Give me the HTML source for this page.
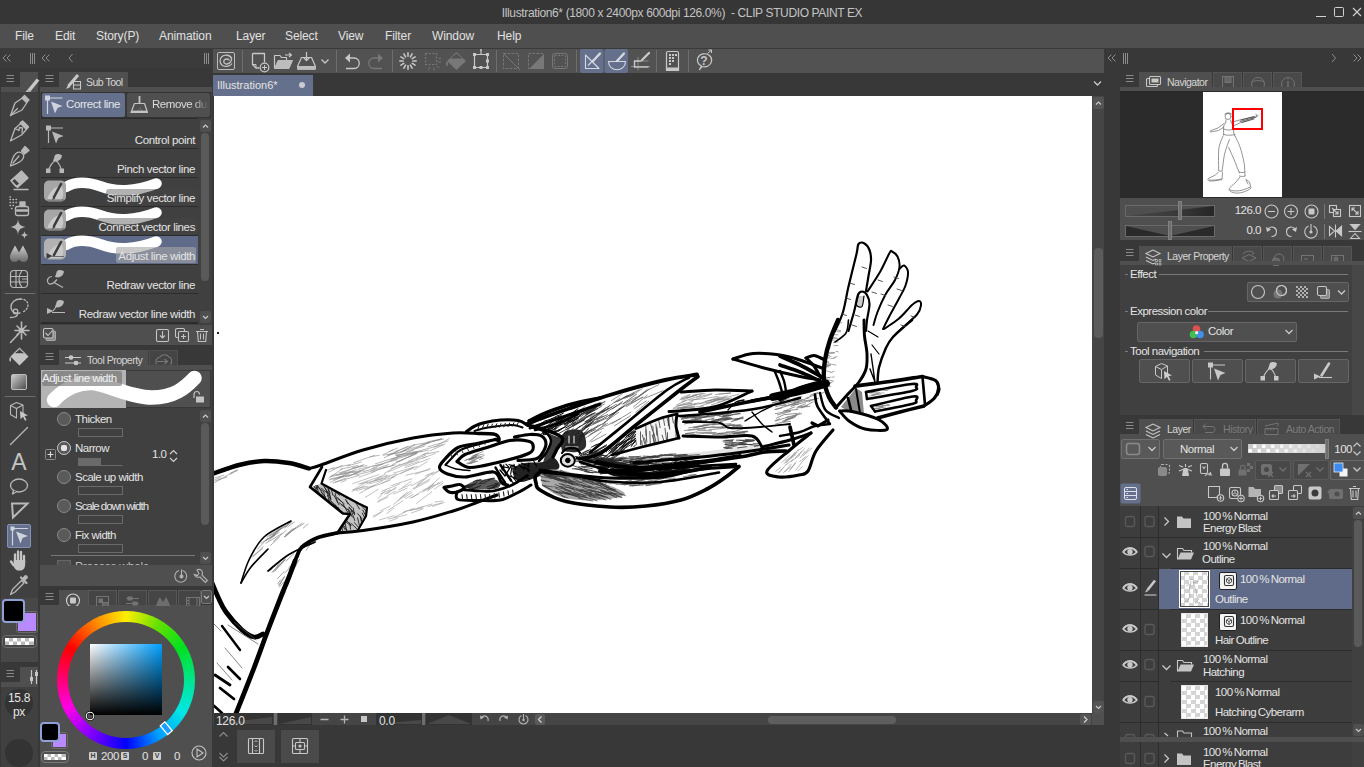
<!DOCTYPE html>
<html><head><meta charset="utf-8"><title>CLIP STUDIO PAINT EX</title>
<style>
*{box-sizing:border-box;margin:0;padding:0}
html,body{width:1364px;height:767px;overflow:hidden;background:#383838;font-family:"Liberation Sans",sans-serif;font-size:12px;color:#d2d2d2}
.abs{position:absolute}
#root{position:relative;width:1364px;height:767px;overflow:hidden;background:#383838}
#title{left:0;top:0;width:1364px;height:24px;background:#363636}
#title .t{position:absolute;left:0;width:1364px;top:6px;text-align:center;font-size:12px;color:#c4c4c4;letter-spacing:-0.37px;white-space:pre}
#menu{left:0;top:24px;width:1364px;height:24px;background:#4f4f4f}
#menu span{position:absolute;top:5px;font-size:12px;color:#e0e0e0;letter-spacing:-0.1px}
#cmd{left:213px;top:48px;width:891px;height:25px;background:#525252;border-top:1px solid #3a3a3a}
#lefthead{left:0;top:48px;width:213px;height:20px;background:#3b3b3b}
#tabrow{left:213px;top:73px;width:891px;height:23px;background:#383838}
#doctab{left:213px;top:75px;width:100px;height:21px;background:#65708c;color:#e4e4e4;font-size:11px;padding:4px 0 0 4px}
#canvas{left:214px;top:96px;width:878px;height:617px;background:#fff;overflow:hidden}

.stb{left:41px;width:157px;height:28px;background:#404040}
.sti{left:41px;width:157px;height:28px;overflow:hidden}
.sti span{position:absolute;right:3px;top:14px;font-size:11.5px;color:#e4e4e4;white-space:nowrap;letter-spacing:-0.38px;z-index:3}
.sti .lb{position:absolute;right:0;top:11px;height:16px;background:rgba(70,70,70,.42);border-radius:3px;z-index:2}
.rl{left:57px;width:140px;height:28px}
.rl .rd{position:absolute;left:0;top:0;width:14px;height:14px;border-radius:50%;background:#5a5a5a;border:1px solid #8a8a8a}
.rl .rd b{position:absolute;left:3px;top:3px;width:6px;height:6px;border-radius:2px;background:#e6e6e6}
.rl span{position:absolute;left:18px;top:1px;font-size:11.5px;color:#e4e4e4;white-space:nowrap;letter-spacing:-0.5px}
.rl .sl{position:absolute;left:21px;top:16px;width:45px;height:9px;border:1px solid #6a6a6a}
.rl .sl b{position:absolute;left:0;top:0;width:22px;height:7px;background:#6a6a6a}
.tb2{top:590px;width:29px;height:15px;background:#454545;border:1px solid #585858;border-bottom:none}
.hsvb{top:752px;width:8px;height:8px;background:#cfcfcf;color:#404040;font-size:7px;line-height:8px;text-align:center;font-weight:bold;border-radius:1px}
.hsvt{top:750px;font-size:11.5px;color:#e2e2e2;text-align:right;letter-spacing:-0.4px}

.tb3{width:29px;height:15px;background:#494949;border:1px solid #555;border-bottom:none}
.nsl{width:90px;height:12px;background:#4f4f4f;border:1px solid #6a6a6a}
.sec{left:1130px;font-size:11.5px;color:#e4e4e4;letter-spacing:-0.5px;white-space:nowrap}
.secl{height:1px;background:#7a7a7a}
.btn{background:#4f4f4f;border:1px solid #666;border-radius:2px}

.lr{position:absolute;left:0;width:232px;background:#3d3d3d}
.lt{position:absolute;font-size:11.5px;line-height:13px;color:#e4e4e4;letter-spacing:-0.55px;word-spacing:-0.9px;white-space:nowrap}
.th{position:absolute;left:61px;width:27px;height:34px;border:1px solid #e8e8e8;background:#fff;background-image:conic-gradient(#d4d4d4 25%,#fff 0 50%,#d4d4d4 0 75%,#fff 0);background-size:9px 9px}
.vi{position:absolute;left:99px;width:18px;height:18px;background:#f4f4f4;border:1px solid #222;border-radius:2px}
</style></head><body><div id="root">
<div id="title" class="abs"><div class="t">Illustration6* (1800 x 2400px 600dpi 126.0%)  - CLIP STUDIO PAINT EX</div></div>
<svg class="abs" style="left:1304px;top:0" width="60" height="24" viewBox="1304 0 60 24" fill="none" stroke="#d2d2d2" stroke-width="1"><path d="M1316 16.500h10"/><rect x="1334.500" y="7.500" width="9" height="9" rx="1"/><path d="M1353 8l8 8M1361 8l-8 8" stroke-width="1.100"/></svg>
<div id="menu" class="abs"><span style="left:15px">File</span><span style="left:55px">Edit</span><span style="left:96px">Story(P)</span><span style="left:159px">Animation</span><span style="left:236px">Layer</span><span style="left:285px">Select</span><span style="left:338px">View</span><span style="left:385px">Filter</span><span style="left:432px">Window</span><span style="left:497px">Help</span></div>
<div id="lefthead" class="abs"></div>
<div id="cmd" class="abs"></div>
<div id="tabrow" class="abs"></div>
<div id="doctab" class="abs">Illustration6*</div>
<div id="canvas" class="abs"><!--DRAW--><svg class="abs" style="left:0;top:0" width="877" height="617" viewBox="214 96 877 617" fill="none" stroke-linecap="round" stroke-linejoin="round"><defs><filter id="bl" x="214" y="96" width="877" height="617" filterUnits="userSpaceOnUse"><feGaussianBlur stdDeviation="0.45"/></filter></defs><g filter="url(#bl)">
<path d="M311.0 487.0L321.5 483.5 358.5 503.5 367.0 507.5 365.0 517.0 357.0 530.0 339.0 532.0 350.0 514.0 343.0 513.5zz" fill="#c4c4c4"/>
<path d="M457.0 461.5C458.3 460.3 456.2 458.0 465.0 454.5C473.8 451.0 499.6 442.8 510.0 440.5C520.4 438.2 523.7 440.2 527.5 441.0C531.3 441.8 532.8 442.9 533.0 445.0C533.2 447.1 534.8 450.5 528.5 453.5C522.2 456.5 505.2 460.7 495.5 463.0C485.8 465.3 474.2 466.8 470.0 467.5z" fill="#fff"/>
<path d="M547.0 433.0L562.0 438.5 553.0 456.0 543.0 463.0 546.0 452.0 550.5 441.0zz" fill="#3c3c3c"/>
<path d="M512.0 468.0C514.2 467.2 519.8 464.0 525.0 463.0C530.2 462.0 538.3 463.0 543.0 462.0C547.7 461.0 550.3 456.0 553.0 457.0C555.7 458.0 561.2 464.8 559.0 468.0C556.8 471.2 546.2 473.7 540.0 476.0C533.8 478.3 526.3 481.7 522.0 482.0C517.7 482.3 515.3 478.7 514.0 478.0z" fill="#222"/>
<path d="M464.0 486.0C465.8 485.2 470.2 482.2 475.0 481.0C479.8 479.8 488.8 478.5 493.0 479.0C497.2 479.5 499.7 482.3 500.0 484.0C500.3 485.7 500.0 488.1 495.0 489.0C490.0 489.9 474.2 489.4 470.0 489.5z" fill="#5c5c5c"/>
<path d="M560.0 441.0C561.0 439.3 562.3 432.7 566.0 431.0C569.7 429.3 578.7 428.5 582.0 431.0C585.3 433.5 586.8 442.5 586.0 446.0C585.2 449.5 581.0 451.2 577.0 452.0C573.0 452.8 564.5 451.2 562.0 451.0z" fill="#2e2e2e"/>
<path d="M636.0 429.0C640.0 427.3 653.2 421.4 660.0 419.0C666.8 416.6 673.8 411.3 677.0 414.5C680.2 417.7 685.2 432.5 679.0 438.0C672.8 443.5 647.2 446.2 640.0 447.5C632.8 448.8 636.7 446.2 636.0 446.0z" fill="#f6f6f6"/>
<path d="M598.0 458.0C605.0 457.7 623.0 457.0 640.0 456.0C657.0 455.0 680.0 454.0 700.0 452.0C720.0 450.0 749.7 444.7 760.0 444.0C770.3 443.3 772.0 445.8 762.0 448.0C752.0 450.2 721.3 454.5 700.0 457.0C678.7 459.5 650.0 461.5 634.0 463.0C618.0 464.5 609.0 465.5 604.0 466.0z" fill="#e4e4e4"/>
<path d="M598.0 460.0C600.3 461.7 605.0 468.0 612.0 470.0C619.0 472.0 630.0 472.0 640.0 472.0C650.0 472.0 662.0 471.3 672.0 470.0C682.0 468.7 697.0 464.3 700.0 464.0C703.0 463.7 696.0 466.0 690.0 468.0C684.0 470.0 675.7 474.5 664.0 476.0C652.3 477.5 630.0 477.7 620.0 477.0C610.0 476.3 606.7 472.8 604.0 472.0z" fill="#111"/>
<path d="M540.0 472.0C543.3 471.7 550.0 468.3 560.0 470.0C570.0 471.7 589.2 478.0 600.0 482.0C610.8 486.0 625.0 491.0 625.0 494.0C625.0 497.0 610.0 499.3 600.0 500.0C590.0 500.7 574.7 500.3 565.0 498.0C555.3 495.7 545.8 488.0 542.0 486.0z" fill="#a8a8a8"/>
<path d="M858.0 296.0C857.8 297.5 855.8 303.2 856.5 305.0C857.2 306.8 860.8 308.0 862.0 306.5C863.2 305.0 863.7 297.8 864.0 296.0z" fill="#ccc"/>
<path d="M780.0 395.0C783.3 393.5 792.7 388.5 800.0 386.0C807.3 383.5 819.7 380.0 824.0 380.0C828.3 380.0 830.0 384.0 826.0 386.0C822.0 388.0 807.7 389.2 800.0 392.0C792.3 394.8 783.3 401.2 780.0 403.0z" fill="#000"/>
<path d="M841.0 407.0L856.0 388.0 862.0 392.0 864.0 414.0 850.0 412.0zz" fill="#8a8a8a"/>
<path d="M217 332h2v2h-2z" fill="#222"/>
<path d="M328.2 488.5L330.1 493.1M337.8 498.7L344.2 503.7M314.2 486.8L317.8 492.2M344.5 526.2L346.9 531.1M317.4 485.2L322.4 493.2M345.6 499.4L347.9 503.8M346.3 500.9L351.9 507.6M335.1 493.4L337.6 502.6M353.2 508.0L354.5 514.6M348.2 508.8L351.6 515.8M316.5 486.1L324.4 492.3M354.4 522.6L358.1 526.8M318.1 491.8L322.2 496.2M340.9 494.1L347.1 498.4M362.2 513.1L364.6 517.5M360.4 516.3L361.5 522.6M329.5 499.9L336.4 505.8M314.0 486.3L316.5 488.8M331.3 489.1L332.7 495.1M335.1 505.3L339.1 508.6M329.5 493.6L330.9 499.1M340.5 529.8L340.7 531.5M328.0 488.7L330.9 499.9M357.6 517.8L359.3 525.0M321.2 492.4L325.5 496.6M345.1 523.3L346.8 531.0M346.7 520.8L351.2 525.2M360.8 517.7L362.0 521.7M317.2 485.8L318.3 492.1M362.7 510.1L365.4 515.1M322.1 494.5L328.1 500.9M342.9 526.2L345.2 529.7M338.0 507.3L339.7 510.3M331.5 489.4L339.8 495.3M349.0 507.3L354.2 513.7M323.8 493.0L325.5 498.9M343.0 503.9L347.6 512.2M349.7 522.9L350.6 529.2M342.0 527.9L342.6 530.6M351.4 523.7L356.7 528.6M337.5 497.6L342.3 502.3M339.2 502.8L344.8 506.9M341.4 504.8L350.5 511.9M323.1 485.2L329.2 494.4M315.8 485.4L317.3 489.8M345.5 521.5L350.7 525.7M333.8 495.0L339.0 504.9M324.5 487.0L327.5 492.5M314.8 489.5L319.5 493.1M327.5 495.1L329.4 501.4M349.2 507.5L354.9 513.0M355.5 502.2L359.5 509.0M348.6 511.5L352.6 517.2M321.2 488.1L329.4 494.8M357.7 513.7L361.8 518.4M361.6 505.8L366.0 511.1M325.4 498.7L331.3 502.9M334.7 505.0L340.5 510.8M326.2 491.0L329.8 498.5M351.2 510.3L354.8 520.5" stroke="#222" stroke-width="0.9"/>
<path d="M269.1 536.2L277.7 531.2M253.2 556.1L262.5 548.6M285.0 526.8L291.8 522.0M285.4 534.9L302.1 523.1M273.3 541.4L286.0 530.5M284.7 528.1L290.5 522.0M285.2 536.8L295.9 527.9M270.0 538.7L280.5 527.9M257.6 549.1L267.6 538.3M272.8 537.3L281.3 528.2M293.0 530.2L304.0 523.4M265.6 540.2L279.1 532.4M268.6 540.7L274.7 534.7M252.5 557.0L263.3 546.6M273.2 535.2L284.4 525.0M287.6 526.9L294.6 521.9M303.3 528.0L308.0 523.9M284.3 536.8L294.4 528.6M271.0 535.1L288.6 524.1M270.3 545.6L279.4 537.3M265.9 543.2L282.1 533.5M284.9 537.0L292.5 528.7M261.1 543.1L275.1 534.8M267.2 537.0L279.2 528.1M266.0 540.5L274.5 534.3M275.1 532.1L285.5 526.0" stroke="#777" stroke-width="0.6"/>
<path d="M278.7 585.3L284.5 576.4M273.3 572.1L285.4 559.3M294.6 567.9L299.5 559.4M278.6 565.0L284.9 559.5M282.8 590.8L287.1 582.6M270.8 570.3L272.2 568.4M284.6 588.8L288.6 583.6M279.5 585.3L284.0 577.2M306.1 550.3L309.7 545.2M284.7 572.7L291.4 566.7M292.2 565.5L298.8 556.6M277.7 583.9L280.5 580.0M283.6 595.2L285.4 591.9M272.0 572.1L278.2 565.6M274.9 571.0L284.7 560.3M290.6 566.7L297.1 560.1M288.7 568.1L299.9 553.8M286.1 561.0L293.9 553.6M279.4 587.1L284.0 581.8M276.6 567.1L279.2 563.1M277.5 578.6L283.9 571.8M295.7 557.4L301.2 549.9" stroke="#666" stroke-width="0.6"/>
<path d="M219.2 479.5L226.9 477.2M214.2 482.7L221.3 478.9M215.4 480.9L226.1 476.4M225.0 476.7L236.1 470.3M213.0 480.8L220.3 477.1M212.9 478.4L223.7 475.2M230.5 472.9L237.4 470.6M230.0 474.6L237.8 469.6" stroke="#888" stroke-width="0.6"/>
<path d="M384.3 457.7L398.2 451.1M421.7 444.5L441.6 438.8M395.0 454.3L415.0 447.1M370.8 470.7L388.5 464.6M382.9 455.2L396.1 453.1M428.0 446.8L448.1 441.0M413.5 445.0L429.1 442.2M415.8 447.1L441.7 438.7M383.4 454.6L392.9 449.7M338.1 478.1L356.4 469.3M396.0 455.2L416.4 451.4M397.7 456.6L413.0 453.3M415.6 451.9L443.0 444.5M390.9 460.8L416.4 452.7M347.3 466.1L361.3 462.0M392.2 464.7L417.0 452.9M332.0 468.9L350.2 464.4M387.8 455.3L405.9 450.4M328.8 478.2L342.5 468.6M434.6 447.2L449.5 438.4M383.0 468.2L393.3 465.4M329.2 479.9L343.6 476.2M416.5 459.0L425.4 455.2M355.7 475.1L380.8 468.8M406.7 451.5L424.6 446.0M352.1 467.9L366.8 465.7M411.8 453.2L428.3 450.2M387.8 455.2L407.9 446.3M330.6 482.2L341.0 477.3M333.1 483.0L345.7 478.2M330.9 478.8L347.9 475.3M399.9 452.6L411.3 447.0M412.8 449.2L430.0 442.4M353.8 473.3L369.4 467.4M362.6 472.0L376.8 467.6M427.8 441.8L441.5 439.0M328.7 472.1L342.6 465.2M396.7 456.1L413.6 450.0M432.6 441.2L443.8 439.1M333.9 479.5L357.2 473.4M430.1 450.8L445.0 444.1M408.2 461.4L428.5 452.3M395.9 462.8L415.5 453.6M396.6 461.9L417.1 453.7M396.4 451.2L414.3 444.8M391.1 459.1L417.6 452.2M340.4 469.3L357.8 465.5M336.3 475.1L356.2 471.9M380.6 468.7L395.5 464.7M341.0 473.1L363.9 464.6M371.7 472.3L386.3 466.7M344.3 473.2L364.3 470.0M346.7 477.0L360.5 471.9M331.4 475.5L353.1 471.0M372.3 468.5L397.9 457.4M358.1 469.2L382.9 464.1M423.3 454.5L438.8 451.5M326.2 470.7L333.4 467.7M353.6 462.7L374.5 455.3M396.2 455.5L421.9 451.3M330.1 476.8L345.4 473.6M338.3 477.4L349.1 474.4M402.6 451.0L414.7 445.0M349.1 475.7L361.8 470.8M335.3 482.2L359.1 475.4M339.4 472.8L362.3 465.7M389.8 451.4L397.5 448.0M375.4 463.8L400.4 456.0M372.5 466.3L397.4 459.7M370.2 457.0L379.3 455.2" stroke="#888" stroke-width="0.6"/>
<path d="M341.2 482.3L346.1 480.2M385.4 476.7L396.7 473.9M365.1 497.4L378.3 489.3M374.5 480.7L390.0 476.4M415.5 474.3L430.1 468.4M358.2 484.2L381.6 476.1M391.5 485.4L411.9 478.8M399.1 465.2L417.1 459.2M393.6 473.0L417.5 466.4M358.9 477.2L375.1 471.5M405.1 465.8L418.8 461.5M359.6 493.3L382.6 480.7M366.2 484.1L387.3 475.1M352.0 491.4L364.6 485.6M391.7 477.2L414.3 467.0M384.6 473.2L399.7 464.2M360.7 483.8L385.7 478.3M387.9 472.1L412.3 461.5M365.1 489.4L390.2 480.3M414.1 469.7L427.4 461.5M369.4 483.8L395.1 476.6M391.1 468.4L409.4 461.9M352.7 489.8L367.4 486.3M356.3 490.7L374.6 485.4M404.7 467.8L429.8 458.5M381.3 483.7L394.0 476.9M353.3 490.0L367.6 481.3M375.1 479.7L385.4 474.0M439.4 470.1L439.9 469.8M410.7 462.4L426.8 456.6M406.0 475.2L429.9 469.7M422.5 458.2L435.2 453.5M352.6 483.7L378.9 474.5M400.6 473.6L413.3 468.2" stroke="#999" stroke-width="0.6"/>
<path d="M381.6 491.3L399.8 483.9M425.3 475.9L433.6 472.1M413.6 489.1L429.2 480.8M416.7 486.0L432.0 473.5M378.3 498.5L386.1 489.3M398.6 489.8L411.5 484.2M416.5 503.4L431.7 491.9M386.9 494.0L396.0 487.1M427.6 491.0L439.0 482.5M373.8 517.2L380.9 512.4M402.5 487.3L411.2 481.3M432.1 475.4L440.1 470.3M427.7 489.5L434.1 484.6M380.6 493.8L390.6 489.8M380.4 510.8L389.9 506.2M412.0 497.8L420.8 491.8M421.6 492.3L429.4 488.5M422.4 490.5L439.9 483.0M428.1 488.8L439.4 477.8M393.5 504.4L404.7 495.0M397.7 501.0L411.3 490.6M388.0 510.3L402.9 500.8M373.1 516.2L383.2 511.1M405.9 498.5L413.1 494.5M438.9 483.9L442.7 481.0M386.7 513.8L393.9 507.9M417.0 484.8L429.1 474.8M409.9 498.2L418.3 494.1M404.1 497.7L412.0 492.3M378.2 500.8L387.3 496.5M393.6 493.9L407.1 488.1M423.7 490.5L433.7 483.4M384.6 494.0L395.8 488.2M399.8 498.4L407.4 492.1M431.5 474.3L439.1 470.4M412.9 488.5L430.2 478.8M411.5 485.9L423.2 479.2M434.7 488.9L443.1 483.2M377.4 502.3L387.6 497.1M387.3 495.7L395.9 490.9" stroke="#999" stroke-width="0.6"/>
<path d="M379.5 519.9L393.9 515.8M411.5 512.9L422.0 509.3M394.3 517.0L405.7 511.8M428.0 506.4L441.9 503.0M389.5 521.3L397.7 518.0M388.5 519.0L406.9 514.8M434.8 502.1L442.8 501.0M404.3 511.3L423.2 508.1M409.7 510.5L423.0 506.7M417.6 508.4L432.0 504.0M402.9 512.6L414.0 508.3M432.6 506.5L444.3 502.3" stroke="#999" stroke-width="0.6"/>
<path d="M470.3 458.2L479.1 456.7M470.3 458.6L476.6 457.0M464.6 460.7L474.0 457.1M474.7 459.3L480.5 456.5M465.8 459.8L475.0 457.1M468.4 459.8L474.5 458.9M471.0 463.5L476.5 461.0M480.4 457.5L484.4 455.1M470.9 458.6L475.7 456.5M471.5 460.9L481.2 457.2M466.8 463.4L474.6 460.2M479.4 459.5L483.2 458.1M469.2 459.9L476.7 456.7M472.7 457.2L477.2 455.1M469.2 463.6L478.0 461.1M477.0 455.6L483.1 454.1M472.1 456.3L478.2 454.2M469.5 460.1L473.4 458.5M467.5 463.8L471.1 462.9M474.2 455.1L483.1 451.5M470.2 462.9L474.9 460.9M471.8 456.5L476.0 455.0" stroke="#666" stroke-width="0.6"/>
<path d="M511.8 465.1L516.3 467.6M523.2 467.3L529.9 470.5M503.8 464.9L503.6 469.1M517.8 479.5L517.7 482.8M511.1 475.5L517.1 482.1M519.0 464.2L521.4 467.6M528.8 463.4L527.7 470.1M513.9 464.2L515.5 468.6M533.3 460.3L536.5 466.1M508.4 477.4L513.2 482.8M521.4 466.6L524.0 469.6M509.7 476.0L515.9 478.4M513.0 471.8L515.9 474.2M509.0 464.4L515.9 467.3M512.0 466.6L510.6 474.3M501.7 466.4L508.8 468.0M524.3 466.3L528.8 471.9M528.2 463.7L527.7 469.2M521.1 463.1L529.2 466.3M527.6 478.1L529.6 478.6M505.9 464.2L508.6 467.0M500.9 465.9L502.2 470.2" stroke="#000" stroke-width="1.1"/>
<path d="M492.0 485.4L497.5 484.3M477.1 486.8L480.9 485.6M492.5 488.0L496.6 486.6M492.8 486.4L497.9 484.2M465.2 488.4L470.9 485.7M488.0 479.7L494.4 478.4M489.0 488.7L493.3 487.2M494.7 483.6L499.4 483.0M487.4 488.7L494.2 487.2M462.4 486.9L467.6 485.3M487.2 479.4L494.0 478.1M468.2 485.0L476.2 484.2M480.3 482.3L486.1 479.7M475.7 481.2L480.4 479.6M487.0 487.0L492.2 485.1M479.0 483.7L485.2 483.0M471.9 489.3L477.2 487.2M470.7 488.9L479.3 486.7M465.2 486.8L472.0 485.2M489.2 489.1L494.6 486.8M473.4 481.6L477.4 479.9M467.4 487.1L472.0 485.8M472.2 484.4L477.1 482.9M463.4 487.0L469.1 486.2M477.0 480.8L480.9 479.8M493.0 486.8L500.3 484.7M485.2 481.9L489.7 480.2M462.7 487.3L466.0 486.9M464.3 486.4L474.2 485.0M464.2 488.1L472.9 486.8" stroke="#222" stroke-width="0.9"/>
<path d="M587.6 422.8L608.7 408.2M614.5 425.8L630.4 415.7M608.9 417.1L621.6 406.9M629.8 396.8L642.3 388.6M578.7 427.8L594.4 418.2M582.9 414.0L605.3 401.7M580.9 412.5L595.6 403.8M579.6 414.5L604.5 404.1M579.4 420.6L597.4 413.0M625.2 406.0L646.9 390.7M636.0 412.1L648.9 401.1M590.1 423.1L607.1 411.9M619.4 409.5L630.3 400.4M611.4 400.6L622.4 393.7M571.1 423.3L586.5 410.5M648.0 390.0L658.8 384.6M588.8 436.0L605.7 423.9M632.4 401.1L647.2 389.5M563.9 422.5L582.5 408.9M634.6 408.4L646.2 401.0M604.5 422.1L618.7 412.4M631.3 402.4L647.2 390.6M571.8 424.0L595.5 409.4M584.9 434.5L598.2 425.3M626.6 406.5L642.2 397.2M607.4 407.5L619.5 398.4M602.6 412.5L616.6 404.1M585.6 437.9L607.5 423.4M637.8 396.9L649.8 388.8M623.7 397.8L639.2 389.8M563.5 419.1L583.7 409.9M584.5 433.4L600.4 424.6M633.4 407.0L647.3 395.0M553.2 421.3L562.2 414.9M624.6 398.5L634.0 392.4M611.6 423.8L630.9 412.2M622.9 404.0L636.7 396.9M604.9 426.4L620.5 418.7M644.7 398.3L663.0 390.7M625.9 405.6L643.1 397.2M589.7 441.4L601.2 431.8M556.2 422.3L567.8 414.6M577.9 411.9L585.1 406.4M567.3 424.9L587.7 408.5M567.9 425.6L578.2 419.7M590.6 434.0L603.5 428.1M591.2 442.0L605.9 434.3M579.6 432.2L585.0 429.1" stroke="#666" stroke-width="0.7"/>
<path d="M596.0 406.0L601.5 402.4M584.9 434.8L591.5 429.1M573.4 426.4L581.9 418.7M581.9 418.6L594.7 413.0M588.9 421.3L596.4 416.1M593.3 423.8L613.7 412.9M582.4 413.6L594.3 405.7M586.4 413.6L595.6 407.4M575.2 424.9L585.5 417.8M626.7 397.6L634.2 393.6M602.4 425.1L616.4 411.6M572.3 425.5L585.2 418.9M609.4 415.5L624.6 406.2M606.9 411.6L621.5 403.3M573.4 424.7L586.7 414.8M591.1 430.8L604.6 422.5M596.3 420.0L607.5 414.6M586.9 427.4L606.7 418.0M585.6 434.3L595.4 429.6M607.0 419.1L619.9 408.1M614.4 402.6L627.0 395.8M595.9 407.4L604.5 401.4M571.7 423.2L580.4 415.6M612.4 408.8L622.5 401.6M617.4 401.6L629.1 395.1M568.1 416.3L578.1 411.3M589.5 412.7L601.3 406.5M586.3 426.2L599.0 420.1M585.4 422.1L596.2 417.4M585.7 426.9L593.9 421.0M613.6 414.4L623.9 406.0M590.2 417.4L603.8 411.0M586.3 421.1L604.1 410.1M583.8 423.9L603.1 416.1M623.0 403.7L636.5 394.2M595.8 416.6L605.9 407.8M596.2 414.3L609.7 405.6M601.4 412.2L612.0 407.0M596.8 415.1L608.5 408.1M580.9 431.6L589.6 424.5" stroke="#333" stroke-width="0.7"/>
<path d="M579.1 439.0L589.3 430.8M542.4 425.5L547.6 422.2M586.9 410.6L593.0 406.7M580.1 432.8L592.0 423.0M584.9 413.7L595.7 408.3M560.7 439.2L573.3 428.6M574.3 418.0L582.9 409.8M570.3 422.4L579.6 416.2M580.4 416.9L595.5 405.7M559.6 437.5L569.2 429.3M544.8 427.3L552.2 422.4M579.3 415.1L594.9 407.3M550.5 424.7L564.4 416.7M587.0 414.7L598.0 405.4M571.9 433.7L579.9 426.2M586.5 417.0L595.0 412.8M574.8 451.3L580.4 443.5M552.5 431.9L567.5 419.2M569.8 446.1L579.6 437.6M556.3 425.0L566.0 419.0M585.9 414.4L599.6 404.8M545.5 427.8L553.3 420.9M564.8 426.5L576.0 416.7M569.6 447.2L578.1 438.8M567.3 444.6L577.2 436.7M566.5 420.3L575.6 415.7M566.2 420.8L583.2 409.7M552.6 433.8L559.1 430.7M571.0 440.6L583.2 433.9M584.5 428.2L590.7 424.1M576.4 414.7L581.8 410.4M559.2 433.3L578.4 422.5M578.3 440.5L588.5 428.6M574.8 415.8L589.7 407.8M566.5 429.7L584.3 420.1M584.8 422.0L594.1 416.5M587.6 414.0L597.9 408.5M558.4 421.7L568.6 414.6M573.0 444.2L585.2 432.0M572.2 449.6L582.6 438.7M582.2 428.3L592.0 419.9M572.5 422.4L581.9 413.6M573.3 430.6L590.8 419.8M573.4 449.4L579.8 442.0M586.1 414.3L593.6 409.2M565.9 444.0L572.7 438.3M558.7 437.7L567.8 431.9M564.1 440.1L578.5 432.8M573.0 436.6L589.0 424.9M562.2 441.6L569.1 436.4M579.5 422.2L592.0 413.8M578.2 440.8L587.0 433.6M571.5 447.0L580.6 440.2M547.1 429.4L553.4 426.2M580.5 415.3L588.1 409.1M547.6 427.3L568.2 417.4M554.6 429.4L563.9 420.7M557.9 425.3L569.4 419.7M566.5 444.9L575.6 438.8M577.7 431.8L593.2 421.4" stroke="#222" stroke-width="0.8"/>
<path d="M715.0 400.5L738.9 394.2M703.7 398.7L717.6 396.4M718.8 394.1L730.7 393.0M682.6 400.1L695.8 395.1M717.6 400.0L728.9 399.4M689.2 400.2L704.7 398.6M681.1 408.7L694.5 405.9M679.8 399.9L689.5 395.5M711.4 404.9L725.4 400.3M680.4 408.6L703.6 406.0M678.6 405.3L692.0 403.2M676.7 406.2L691.4 403.5M686.4 398.0L697.4 394.5M715.5 394.5L730.6 393.1M681.1 398.1L690.1 394.3M674.1 407.6L681.3 404.7M708.7 401.0L727.2 395.9M682.3 408.2L699.1 402.8M692.3 395.4L703.3 393.5M705.2 401.5L724.2 397.5M677.1 408.1L694.2 407.3M696.7 397.2L712.0 393.7M717.4 402.2L730.0 398.8M691.1 400.8L711.8 394.1M699.6 403.5L719.8 396.9M681.2 399.1L696.8 395.2M681.7 401.9L700.8 395.5M676.9 408.9L695.8 403.3M706.5 403.5L719.8 399.2M673.2 408.5L686.0 406.7M713.8 400.4L731.3 398.0M682.7 404.0L692.5 401.5M700.8 405.8L714.0 401.6M676.5 405.0L685.8 400.6M694.8 404.5L715.8 401.0M698.7 394.4L705.4 393.5" stroke="#777" stroke-width="0.6"/>
<path d="M655.9 424.0L656.8 435.2M645.9 429.8L646.8 442.1M641.7 440.7L642.3 446.4M645.8 425.4L646.2 435.6M662.1 435.1L663.9 440.9M644.6 438.2L646.4 445.7M676.0 430.6L676.0 438.1M668.6 417.0L668.4 425.4M642.4 435.0L644.8 444.2M640.5 431.8L640.6 444.8M636.0 441.6L636.3 444.6M656.8 427.0L658.5 442.9M658.8 420.6L660.1 427.6M663.6 419.3L664.6 425.4M677.2 428.6L678.8 436.5M672.2 416.6L673.4 423.0M668.6 417.1L669.7 428.3M665.0 428.3L666.6 440.3M652.8 426.1L654.3 443.3M667.5 432.6L667.5 440.9M652.3 435.0L654.6 443.7M653.8 432.8L656.2 442.9M650.6 423.8L652.6 431.0M678.2 432.2L678.2 438.0M667.1 417.9L669.7 429.2M649.8 431.4L650.3 444.2" stroke="#333" stroke-width="0.8"/>
<path d="M625.0 447.9L634.7 437.9M611.2 449.2L619.6 441.9M630.1 436.2L635.6 431.6M616.6 454.7L624.5 449.3M613.2 455.0L617.5 450.2M621.1 450.9L632.1 443.7M633.7 446.9L635.5 445.1M621.5 449.7L626.4 445.2M611.7 452.0L616.7 447.1M623.8 442.4L629.6 438.6M631.3 439.2L635.3 435.9M625.0 437.9L633.8 430.8M628.4 435.7L635.5 429.1M630.8 442.0L635.8 438.3M606.3 452.0L607.1 451.2M612.1 453.0L621.7 443.4M609.9 453.5L617.0 447.0M626.0 437.1L631.9 431.5M622.5 442.9L628.0 439.6M617.3 450.5L622.3 445.4M631.3 446.5L635.5 440.6M621.8 447.6L634.9 439.9M631.5 445.3L635.7 440.1M629.0 437.0L634.9 430.9M630.9 442.8L635.1 439.1M633.3 443.6L635.8 441.0M622.0 446.3L629.1 438.5M624.3 446.7L632.1 439.3M619.3 451.1L629.0 441.4M628.4 440.2L635.1 436.4M608.7 451.2L617.8 444.5M613.0 452.6L623.1 441.4M626.4 436.1L635.6 431.2M612.6 455.1L616.5 451.6M613.1 450.3L619.5 443.2M608.9 453.4L614.8 446.8M619.9 450.9L625.8 445.0M618.8 445.9L624.5 442.6M618.0 445.3L629.1 436.0M630.4 437.9L635.8 434.3M615.7 446.4L624.5 439.3M622.7 445.3L628.5 439.4M619.5 448.3L631.9 440.5M629.8 438.7L635.5 432.1M617.2 451.7L626.2 442.2M619.1 445.1L630.4 437.3" stroke="#111" stroke-width="0.9"/>
<path d="M680.4 417.2L689.1 416.5M717.6 413.3L731.1 413.5M689.8 416.5L700.5 416.7M732.2 414.4L740.1 413.8M720.5 421.7L728.3 419.5M699.0 418.7L713.8 414.3M732.9 420.1L743.3 417.7M714.0 415.0L728.9 412.2M711.6 419.9L731.9 418.6M687.2 422.1L698.3 419.8M723.8 419.0L743.0 418.6M711.2 415.8L720.0 413.0M723.3 415.7L731.0 413.4M686.1 421.7L696.5 418.4M693.1 420.1L701.4 420.4M684.9 423.0L692.4 423.3M695.3 419.1L708.3 416.4M706.8 415.7L713.3 413.7M711.7 422.1L729.4 418.1M722.2 416.2L732.5 414.7M735.6 419.7L742.8 416.8M719.6 416.4L730.5 415.7M731.3 421.6L739.3 419.3M683.4 420.5L701.5 419.9M718.1 419.7L728.2 417.0M714.7 415.6L727.8 412.6M710.5 421.7L722.9 417.8M711.9 421.0L731.3 419.0M717.8 415.8L728.3 413.0M723.2 416.8L740.1 413.3M681.5 419.5L687.8 417.7M681.5 418.4L694.0 416.8M721.9 418.1L731.2 417.7M706.0 414.7L716.8 413.8M691.8 417.8L709.6 416.6M694.2 416.7L714.1 416.9M705.5 420.2L713.8 418.4M682.5 417.6L694.3 416.5M682.8 420.9L691.2 420.5M684.7 424.0L691.7 421.8M725.6 414.0L732.1 412.1M685.6 418.0L695.7 417.8M685.2 422.0L697.4 419.9M687.1 420.7L706.7 420.6M710.8 416.1L727.7 413.5M717.9 415.2L730.2 412.1" stroke="#444" stroke-width="0.7"/>
<path d="M685.5 433.6L696.6 432.0M695.9 428.2L705.8 429.0M731.8 428.6L742.5 426.0M697.3 426.3L715.7 424.2M732.4 432.2L743.1 428.8M718.0 433.4L730.1 434.2M733.7 433.9L746.3 431.8M704.1 427.8L713.4 426.6M691.0 434.9L707.0 433.0M732.8 433.8L747.4 431.2M726.4 431.9L737.7 432.2M722.4 427.4L732.1 427.7M713.4 426.9L725.8 427.2M734.8 433.0L744.6 433.4M737.8 432.1L748.0 431.8M685.4 433.7L694.1 433.0M696.8 432.3L716.0 432.5M693.6 427.9L702.7 426.3M732.3 426.8L740.9 424.7M726.4 426.0L739.5 424.7M697.5 430.2L711.5 430.9M733.9 433.3L745.7 431.1M712.5 424.8L731.1 423.7M708.7 429.9L727.8 427.7M721.7 426.3L734.2 424.6M737.7 433.5L747.4 431.3M684.2 430.6L694.8 429.1M703.1 424.8L714.6 423.9M727.4 428.9L740.4 425.7M726.6 425.1L742.1 426.1M702.7 427.7L722.6 427.4M688.7 427.9L705.9 425.3M688.1 430.3L704.6 428.8M685.9 433.8L695.3 434.8M729.0 424.8L740.2 425.6M729.2 434.1L744.0 432.1M707.1 433.3L727.3 434.3M712.8 434.5L722.6 433.9M717.8 433.5L733.5 431.7M693.9 427.1L708.3 425.5" stroke="#666" stroke-width="0.7"/>
<path d="M772.2 403.0L779.9 401.5M780.5 400.8L789.1 398.6M775.3 413.7L790.5 410.8M782.9 422.3L790.5 421.4M775.2 409.4L788.6 405.6M785.8 420.7L794.5 417.5M775.6 406.7L785.8 404.4M783.3 411.4L794.8 406.9M793.3 398.5L801.7 396.5M788.5 405.0L799.0 401.9M801.6 408.0L813.2 401.8M785.4 414.6L796.9 413.3M788.4 403.1L802.4 399.6M775.9 405.0L787.7 402.8M797.8 406.8L805.5 403.8M772.7 402.7L779.5 400.6M783.9 411.0L797.9 409.4M791.2 404.7L804.4 400.6M809.0 401.6L817.1 398.2M793.4 403.0L808.8 397.9M776.5 418.1L784.8 414.3M774.9 420.8L779.6 418.8M775.7 425.8L781.2 423.9M777.4 414.9L790.5 411.4M790.9 406.5L800.0 403.2M806.1 398.2L814.2 395.1M785.0 420.6L796.9 415.4M796.3 408.0L809.9 406.3M781.9 405.9L798.5 404.2M785.5 419.6L799.9 412.9M787.0 417.2L801.7 413.7M800.4 403.5L810.0 400.5M782.7 421.1L795.7 416.4M775.7 423.9L785.4 421.3M814.1 394.0L823.8 392.7M775.9 420.9L788.4 416.9M799.7 406.7L807.6 405.8M810.1 395.3L817.9 392.5M804.2 401.0L818.2 398.5M775.0 409.6L781.9 407.9" stroke="#666" stroke-width="0.7"/>
<path d="M739.5 442.8L754.2 440.8M731.6 444.6L744.9 444.9M737.5 447.9L746.8 446.7M736.3 440.2L743.7 440.2M745.0 439.3L753.4 440.0M745.3 440.5L754.9 440.1M726.3 448.5L736.6 445.8M723.7 447.4L728.5 447.7M733.2 443.8L746.2 443.6M725.5 440.3L732.6 440.4M725.3 444.5L732.8 443.5M753.1 443.7L758.4 443.8M749.8 444.6L758.1 445.4M740.8 444.1L751.1 444.5M724.2 448.1L732.0 448.3M743.4 442.0L753.8 440.6M725.6 446.2L733.0 445.5M723.0 440.9L733.7 439.8M725.5 443.1L738.8 442.2M739.6 440.4L749.2 440.8M724.9 444.5L732.2 445.2M738.9 443.1L746.7 441.1M723.9 442.1L732.4 441.6M754.3 446.4L759.0 445.6M739.9 444.2L752.3 444.7M728.1 446.2L743.3 443.9" stroke="#333" stroke-width="0.8"/>
<path d="M601.3 457.9L609.8 458.4M610.8 465.0L627.2 460.9M643.2 456.1L658.0 457.0M603.8 463.5L614.7 461.4M623.5 460.6L641.0 461.9M605.8 459.7L622.8 458.4M635.4 460.9L644.8 458.3M669.0 455.3L681.4 455.4M600.6 459.7L614.3 457.7M665.5 455.6L686.5 454.6M635.3 458.7L653.0 459.4M603.7 462.0L613.7 460.2M629.0 456.5L638.7 456.9M606.1 462.8L621.8 458.7M661.1 458.3L671.5 457.8M615.7 458.6L623.2 457.0M657.0 456.4L675.8 453.8M599.6 458.9L616.3 460.3M602.3 459.7L614.0 458.4M659.7 458.9L672.9 459.0M601.3 462.0L607.9 462.0M624.0 463.2L643.0 460.3M602.8 462.0L616.4 462.4M608.5 464.4L619.2 464.1M632.2 462.7L641.4 460.1M689.5 456.1L699.9 456.5M611.2 460.0L624.9 458.5M630.0 459.6L642.2 458.7M618.8 459.8L633.8 458.3M659.3 455.2L672.2 454.0M642.8 458.6L657.4 455.9M613.1 459.4L626.3 457.3M628.7 462.7L637.7 462.4M612.5 463.5L631.2 462.5M674.8 456.1L685.3 454.4M639.9 458.6L655.6 455.7M631.5 459.8L654.2 456.0M674.1 456.4L695.9 456.8M666.1 459.8L687.5 454.7M636.5 458.0L649.2 457.1M633.6 463.0L645.2 461.1M652.7 457.2L662.0 454.6M649.9 458.3L665.5 455.0M682.1 455.9L699.4 454.6M623.0 461.6L639.3 460.5M618.9 459.5L640.6 456.2M621.4 464.2L631.1 462.3M613.9 464.2L637.0 461.6M610.7 460.8L631.8 460.7M648.7 457.4L659.2 457.4" stroke="#333" stroke-width="0.7"/>
<path d="M543.1 432.5L555.0 423.7M548.9 420.2L557.9 415.5M568.5 421.9L576.9 419.1M554.4 424.0L568.8 415.6M541.8 433.5L548.8 429.3M564.3 424.2L571.0 419.9M536.3 427.5L543.4 422.6M546.1 434.1L556.0 428.0M565.4 428.1L575.5 422.5M541.9 433.2L552.6 425.3M550.0 430.3L557.5 424.6M567.1 422.1L575.2 417.7M537.5 426.7L546.6 422.6M557.8 416.0L563.4 413.1M555.8 426.8L564.3 420.7M564.3 424.9L578.5 418.1M550.8 434.0L564.6 427.1M545.4 420.9L560.8 415.8M570.0 414.2L578.4 410.9M551.6 433.2L563.4 427.9M576.9 412.3L587.1 408.6M544.2 434.9L556.0 430.6M570.6 415.7L585.7 410.3M567.5 416.4L578.0 408.7M560.0 425.1L568.0 422.1M567.0 421.1L578.2 416.6M543.3 434.7L549.9 430.5M575.0 414.3L585.4 409.6M555.4 424.7L567.7 415.3M546.9 429.9L557.4 425.0M558.3 431.3L567.6 425.0M548.4 433.0L556.6 427.0M563.1 422.9L574.7 416.0M543.7 433.7L552.8 427.5M569.7 416.1L584.5 410.5M553.0 427.0L561.6 424.1M543.0 433.9L548.6 429.5M537.5 425.9L545.2 420.7M556.0 421.9L570.4 414.2M572.9 415.7L581.7 411.9" stroke="#111" stroke-width="1"/>
<path d="M643.4 470.8L662.7 468.6M654.1 461.4L678.0 460.1M599.6 472.9L607.1 473.5M634.4 463.8L653.3 461.2M624.4 472.1L637.4 472.2M659.4 471.3L670.3 472.8M631.2 475.2L643.5 473.9M634.1 467.1L658.5 464.8M672.5 468.2L690.3 464.9M677.6 465.5L698.5 465.2M630.5 470.0L651.0 466.7M672.0 461.0L691.7 458.7M694.8 458.4L699.0 458.2M674.8 468.1L690.7 464.9M657.4 473.0L679.4 469.2M653.1 472.0L671.4 467.6M619.2 469.6L632.3 467.9M655.6 462.9L671.9 463.4M638.4 475.0L661.7 470.1M626.9 467.7L640.0 466.4M638.7 462.6L656.3 464.2M629.6 461.3L646.2 462.9M649.0 474.3L673.2 471.7M674.0 462.8L698.3 460.5M611.2 461.3L621.5 460.6M610.4 468.7L622.0 467.5M633.6 475.2L649.4 473.0M680.0 461.6L697.5 458.3M597.3 468.1L610.6 464.9M593.3 461.9L606.7 461.1M672.8 466.7L687.9 464.3M680.8 465.8L697.2 465.1M595.7 459.2L603.7 459.1M662.2 463.5L676.4 462.5M630.0 463.4L646.2 462.7M608.0 472.2L632.5 466.9M634.8 464.1L647.0 461.6M636.4 472.0L654.5 469.9M674.9 461.6L694.8 464.2M611.0 472.9L625.6 472.4M689.3 469.3L699.9 469.7M602.1 462.9L616.5 462.5M629.8 473.2L651.9 468.5M595.7 466.8L613.0 466.4M592.5 461.0L603.6 462.3M624.7 464.8L648.7 464.7M651.5 465.7L671.5 464.8M691.6 466.0L699.7 466.4M658.9 469.8L678.1 471.9M677.0 462.5L696.4 463.1M611.5 464.2L637.3 465.1M676.2 471.3L689.7 468.8M646.1 462.6L658.8 461.0M600.6 473.1L619.8 468.8M618.4 474.4L634.0 472.2M625.2 467.9L650.6 461.7M690.0 463.0L698.5 461.2M598.5 471.0L610.9 470.4M608.3 462.3L625.8 464.0M600.8 474.0L615.1 470.5M666.4 471.2L691.7 469.9M598.1 469.1L615.9 466.4M598.7 471.3L623.4 470.2M646.5 467.8L671.7 469.8M643.6 463.2L661.1 464.6M594.4 464.0L614.9 464.0M648.7 468.9L673.3 470.9M630.7 466.1L647.3 466.5M598.2 468.9L609.8 469.4M595.6 461.1L612.5 459.8" stroke="#111" stroke-width="1"/>
<path d="M593.9 459.2L600.7 455.7M594.1 461.9L601.6 457.3M610.3 455.5L617.6 450.3M594.7 451.2L604.4 446.2M587.4 454.7L594.9 452.0M589.3 461.8L603.0 455.1M614.2 454.3L619.5 451.4M591.2 447.3L597.1 444.2M597.8 450.7L606.4 445.8M579.4 456.4L585.5 453.7M579.0 454.7L587.9 450.2M612.8 458.8L622.0 452.5M583.6 455.1L591.1 450.3M608.4 456.6L617.7 450.5M616.1 454.6L622.7 451.4M591.1 455.4L604.9 448.9M601.2 453.1L611.1 448.0M609.4 461.6L613.7 457.9M603.5 460.4L611.4 454.8M583.7 458.4L591.5 452.6M585.0 455.3L597.6 450.5M595.1 452.2L606.5 444.7M580.3 455.4L590.6 449.2M598.2 461.7L605.3 456.4M591.8 453.3L597.9 450.8M604.6 456.9L615.5 448.6M594.0 445.9L603.5 441.8M584.9 461.5L589.6 459.0M607.1 460.2L619.5 453.8M584.3 458.2L597.0 451.9" stroke="#222" stroke-width="0.9"/>
<path d="M791.1 458.0L798.3 449.4M775.8 471.3L780.7 467.5M795.8 470.2L804.0 459.5M800.0 458.1L805.3 451.1M799.9 461.4L805.8 456.7M803.3 455.9L809.2 447.9M798.1 470.9L802.1 466.7M779.1 472.5L786.8 463.7M790.3 469.4L796.2 461.7M798.7 455.3L804.5 448.7M785.2 461.1L797.3 452.2M786.6 464.5L793.3 459.3M788.9 471.5L795.2 463.5M783.5 472.4L791.1 466.6M795.3 457.7L801.5 451.5M784.0 463.5L795.7 454.7M805.7 453.5L811.8 448.1M804.3 459.4L808.2 455.8M784.9 471.8L791.2 464.1M786.4 462.8L795.0 452.2M797.9 450.8L802.9 447.3M781.7 462.6L789.6 455.1M791.3 461.4L799.4 455.6M778.4 472.8L783.0 468.5" stroke="#888" stroke-width="0.6"/>
<path d="M570.5 476.2L584.4 479.8M540.4 472.8L553.4 477.4M582.9 486.4L591.7 487.7M589.2 489.4L608.3 494.7M543.4 485.8L551.0 489.7M542.8 485.3L552.5 486.9M574.2 476.4L584.3 478.5M604.9 486.7L617.1 491.4M580.8 489.4L592.9 491.5M611.0 492.8L621.9 497.3M552.1 490.5L568.8 494.6M562.1 491.3L579.5 497.4M582.5 480.0L593.5 484.8M584.4 492.9L592.5 495.5M555.4 488.1L570.2 494.5M574.1 491.5L584.0 495.4M582.2 487.1L592.0 491.2M561.2 479.9L573.5 482.0M595.7 486.8L612.7 490.2M545.9 471.4L560.1 474.7M600.7 490.4L611.3 494.1M558.9 473.6L577.6 479.1M554.1 472.5L563.3 475.0M549.4 475.7L562.3 480.3M558.9 483.4L574.8 490.3M603.8 486.1L615.5 489.8M555.3 484.5L566.6 489.7M576.0 489.6L591.7 492.9M553.7 491.9L562.2 493.6M545.5 473.1L555.2 476.4M589.5 496.6L600.1 498.5M578.8 498.4L592.7 501.0M603.8 492.4L612.5 495.6M600.8 491.1L617.1 495.2M566.3 492.5L586.0 495.6M565.1 492.9L582.6 498.5M559.4 486.4L573.6 488.5M595.1 481.3L608.5 488.2M598.1 491.9L605.8 494.7M588.3 495.1L596.4 497.0M541.7 472.3L551.3 478.5M551.0 471.1L565.9 478.3M605.7 492.1L622.4 494.7M576.2 484.3L590.5 487.1M555.6 475.2L571.2 480.1M583.2 496.2L597.1 500.8M541.3 480.4L546.1 481.7M609.2 488.9L625.5 495.7M559.2 491.7L573.9 494.9M586.3 493.6L598.5 496.0M608.3 493.5L616.8 497.9M554.4 471.7L566.6 476.8M589.8 492.6L604.2 497.3M589.3 486.1L606.1 491.6M570.2 481.3L584.7 485.7M565.7 480.7L577.9 484.3M568.8 482.2L580.8 486.5M560.5 470.2L570.1 474.8M560.9 483.8L569.4 486.0M613.1 495.5L621.3 497.4M595.3 493.6L607.6 497.4M556.3 491.5L564.8 497.6M542.5 485.0L557.7 493.0M589.6 480.8L607.6 489.5M582.1 481.2L601.5 485.7M554.4 478.9L565.9 483.0M570.3 494.3L587.1 497.8M570.3 487.8L581.9 492.1M540.6 472.3L547.8 475.7M560.4 486.6L573.5 493.0M553.7 486.6L571.2 490.9M544.3 475.6L563.1 481.2M549.3 475.2L559.8 477.1M563.2 480.1L575.3 485.2M572.8 478.8L590.8 486.6M580.7 490.3L591.8 493.4M564.6 490.2L578.7 494.5M550.1 473.5L566.3 477.8M597.0 482.9L605.3 484.8M582.7 479.1L594.1 481.8M556.4 477.4L572.9 484.7M597.0 496.6L605.8 500.0M540.3 473.6L551.1 476.9M607.0 487.2L615.0 490.3M596.8 481.1L602.8 484.0M544.2 472.2L558.2 480.6M591.0 490.5L602.2 493.2M561.3 473.1L580.3 478.8M554.1 472.4L569.5 478.2M548.6 475.5L562.0 479.9M582.4 490.2L595.0 496.3M541.1 480.0L549.3 481.7M561.5 495.5L568.1 498.1M595.6 494.0L605.2 496.8M547.1 473.9L556.4 476.6M567.7 485.5L580.1 489.8M600.3 484.1L614.4 490.2M540.9 476.5L559.8 479.8M563.9 481.5L572.7 484.5M593.3 491.5L610.9 499.4M560.2 471.3L575.7 478.0M563.5 479.2L581.8 482.8M574.7 494.4L586.4 497.5M579.5 491.1L590.8 496.6M599.0 482.0L609.0 486.7M579.5 479.3L598.3 483.9M543.7 474.3L551.2 478.2M581.5 485.2L596.0 489.4M545.3 471.5L556.6 477.4M607.1 490.2L614.9 494.1" stroke="#333" stroke-width="0.7"/>
<path d="M645.9 485.7L660.3 482.4M629.8 482.1L644.8 479.3M621.4 484.5L639.5 482.5M629.5 485.7L643.3 485.2M646.2 485.4L661.3 483.5M666.5 480.3L673.9 480.4M627.4 483.2L640.2 483.3M648.1 481.1L663.6 478.4M661.5 481.7L670.3 480.9M665.6 480.8L677.2 479.4M622.4 483.3L631.8 483.9M625.8 484.0L644.1 479.5M632.3 486.1L639.7 484.8M683.4 476.9L696.2 474.6M646.1 479.5L666.0 477.9M624.1 485.1L632.1 482.9M628.4 483.2L645.1 479.9M688.9 475.2L695.1 474.7M636.0 483.7L650.8 484.9M654.7 480.8L663.6 478.3M615.9 484.3L635.2 484.7M625.2 481.6L631.7 480.2M664.8 478.2L675.2 478.2M605.3 483.3L611.4 482.0M608.9 483.8L616.9 483.4M611.1 482.0L619.9 481.9M640.6 483.4L653.9 482.5M618.3 482.5L631.3 483.4M653.2 482.7L670.8 479.4M630.0 485.9L636.3 485.0" stroke="#555" stroke-width="0.7"/>
<path d="M586.4 464.3L595.5 466.6M596.4 460.0L617.0 462.5M617.3 467.3L625.7 467.5M622.3 465.7L634.1 467.9M584.6 471.6L592.8 472.9M583.6 459.8L604.1 459.6M626.5 470.1L636.5 469.7M573.4 465.7L586.6 470.2M623.5 469.4L631.7 470.6M613.8 467.9L629.1 470.5M588.5 458.2L596.9 460.9M597.0 452.6L607.3 457.0M613.1 462.0L625.1 464.9M589.5 466.4L608.4 470.4M584.2 469.0L599.1 472.4M593.9 464.5L603.2 464.4M583.2 454.9L600.4 454.6M612.6 465.2L629.8 465.9M620.2 465.3L629.7 465.8M588.1 457.8L607.2 458.1M608.6 472.4L614.6 472.5M581.4 462.6L600.9 465.2M601.5 464.5L619.3 467.5M633.9 469.4L638.7 469.4M581.4 466.4L589.7 466.5M584.1 460.3L592.1 460.6M581.6 456.8L594.8 457.9M585.8 459.4L604.5 458.9M616.2 463.0L623.1 462.8M579.8 468.7L589.0 471.3M599.0 464.3L611.1 464.4M605.4 465.4L621.1 468.3M591.8 453.8L601.1 453.2M572.2 468.8L581.5 469.1M575.0 468.6L588.5 472.1M589.0 472.2L604.4 473.0M594.2 453.0L601.7 455.5M575.6 456.6L587.5 459.6M601.5 469.6L611.9 472.0M602.5 455.5L608.0 455.8M574.4 459.1L583.3 461.9M575.2 456.5L583.4 458.1M600.7 465.3L618.6 465.2M580.7 464.0L592.9 465.9M589.6 461.2L609.6 466.5M616.0 462.1L627.8 465.6M600.8 461.3L618.8 462.1M578.8 466.7L592.2 468.5M609.6 464.8L624.4 471.1M610.3 460.9L623.4 464.9M598.2 463.4L607.6 464.1M574.8 461.1L589.2 462.4M603.0 460.5L611.2 460.6M581.0 459.1L598.4 460.4M599.7 469.7L609.4 469.4M578.0 459.4L590.9 460.8M609.0 463.5L620.9 466.6M598.6 464.9L616.2 464.7M586.3 465.5L606.0 466.8M590.6 456.6L601.0 459.5" stroke="#222" stroke-width="0.8"/>
<path d="M828.2 355.7L831.0 356.5M826.5 378.2L830.6 377.2M836.6 329.8L840.4 330.6M827.4 383.2L830.8 383.3M826.8 355.6L829.0 355.6M828.4 386.3L830.6 386.8M826.8 357.8L829.5 357.9M832.7 331.8L835.3 332.1M827.2 379.6L833.3 381.1M828.9 353.8L834.3 353.1M837.2 331.7L840.6 331.7M832.0 377.3L834.2 376.9M840.3 322.7L841.8 322.8M836.1 351.3L837.9 351.7M836.0 324.4L839.5 324.4M826.2 362.6L828.6 362.5M826.6 377.3L829.3 377.7M825.7 364.5L830.2 364.9M828.1 383.2L832.3 382.1M833.1 364.6L835.9 365.1M834.4 327.9L837.8 327.2M831.9 338.6L837.8 338.8M828.0 352.3L834.5 352.5M834.0 334.6L837.7 334.8M830.9 372.5L834.1 371.3M828.2 363.6L832.5 364.3M833.5 342.5L838.0 341.9M831.8 337.3L836.3 337.9M830.3 339.5L834.1 340.3M825.5 366.6L829.1 365.5M833.9 345.7L837.9 345.5M827.7 347.5L830.3 347.9M834.1 329.5L836.7 329.0M825.4 366.8L828.6 366.9M830.8 358.5L835.1 358.0M826.2 365.6L830.6 365.7M834.0 357.5L837.1 356.5M826.3 370.8L830.7 372.1M827.3 382.6L828.7 382.7M826.0 361.0L828.5 361.6" stroke="#666" stroke-width="0.6"/>
<path d="M884.7 390.1L889.8 389.6M869.0 396.1L874.6 395.3M882.6 390.4L887.2 390.5M871.7 394.5L878.6 394.1M871.3 392.5L876.8 392.2M869.3 393.1L873.7 392.7M871.7 395.6L876.1 394.7M876.0 394.7L881.2 394.0M876.9 393.3L884.1 392.9M873.5 394.4L879.4 392.5" stroke="#777" stroke-width="0.6"/>
<path d="M874.6 409.2L880.2 408.0M881.2 407.4L885.5 407.1M879.1 406.8L883.6 406.8M875.5 408.3L882.6 407.3M882.0 405.3L889.3 405.5M887.2 405.2L889.8 404.9M881.1 406.6L888.4 404.5M875.9 406.4L883.3 405.6M876.6 406.2L881.8 406.4M874.5 408.3L880.3 408.4" stroke="#777" stroke-width="0.6"/>
<path d="M295.0 561.0C294.0 563.7 291.2 571.5 289.0 577.0C286.8 582.5 285.5 585.2 282.0 594.0C278.5 602.8 272.7 617.7 268.0 630.0C263.3 642.3 259.5 653.7 254.0 668.0C248.5 682.3 238.2 708.0 235.0 716.0" stroke="#000" stroke-width="4.8" fill="none"/>
<path d="M212.0 583.0C213.0 585.3 215.7 592.2 218.0 597.0C220.3 601.8 222.0 606.5 226.0 612.0C230.0 617.5 237.3 625.8 242.0 630.0C246.7 634.2 250.5 636.3 254.0 637.0C257.5 637.7 261.5 634.5 263.0 634.0" stroke="#000" stroke-width="4.8" fill="none"/>
<path d="M222.0 626.0L240.0 650.0" stroke="#000" stroke-width="2.4" fill="none"/>
<path d="M228.0 667.0L240.0 679.0" stroke="#000" stroke-width="2.6" fill="none"/>
<path d="M215.0 675.0L230.0 685.0" stroke="#000" stroke-width="2.8" fill="none"/>
<path d="M220.0 688.0L234.0 699.0" stroke="#000" stroke-width="2.8" fill="none"/>
<path d="M213.0 705.0L222.0 713.0" stroke="#000" stroke-width="2.6" fill="none"/>
<path d="M228.0 625.0L258.0 644.0" stroke="#555" stroke-width="0.7" fill="none"/>
<path d="M214.0 624.0L221.0 631.0" stroke="#555" stroke-width="0.7" fill="none"/>
<path d="M225.0 648.0L242.0 668.0" stroke="#555" stroke-width="0.7" fill="none"/>
<path d="M217.0 663.0L232.0 680.0" stroke="#555" stroke-width="0.7" fill="none"/>
<path d="M234.0 622.0L256.0 640.0" stroke="#555" stroke-width="0.7" fill="none"/>
<path d="M212.0 474.0C216.5 472.5 230.3 467.2 239.0 465.0C247.7 462.8 255.7 461.3 264.0 461.0C272.3 460.7 281.5 461.8 289.0 463.0C296.5 464.2 305.7 467.6 309.0 468.5" stroke="#000" stroke-width="4.4" fill="none"/>
<path d="M309.0 468.5C311.0 467.9 312.0 468.1 321.0 465.0C330.0 461.9 347.7 454.5 363.0 450.0C378.3 445.5 398.0 440.8 413.0 438.0C428.0 435.2 442.2 433.8 453.0 433.0C463.8 432.2 473.8 433.4 478.0 433.5" stroke="#000" stroke-width="3" fill="none"/>
<path d="M336.0 533.0C340.5 532.6 350.2 532.3 363.0 530.5C375.8 528.7 398.0 525.2 413.0 522.0C428.0 518.8 442.2 514.3 453.0 511.0C463.8 507.7 470.7 504.7 478.0 502.0C485.3 499.3 493.8 496.2 497.0 495.0" stroke="#000" stroke-width="3" fill="none"/>
<path d="M337.0 533.0C333.8 533.8 323.8 535.2 318.0 537.5C312.2 539.8 305.5 543.9 302.0 547.0C298.5 550.1 298.7 552.3 297.0 556.0C295.3 559.7 292.8 566.8 292.0 569.0" stroke="#000" stroke-width="3.8" fill="none"/>
<path d="M322.0 467.0L310.0 487.0 343.0 513.5 350.0 514.0 338.0 532.0" stroke="#000" stroke-width="2.6" fill="none"/>
<path d="M326.0 470.0L321.5 483.5 358.5 503.5 367.0 507.5 366.0 516.0 358.0 530.0" stroke="#000" stroke-width="2.2" fill="none"/>
<path d="M291.0 521.0C286.5 523.7 271.0 530.5 264.0 537.0C257.0 543.5 252.8 552.3 249.0 560.0C245.2 567.7 242.3 579.2 241.0 583.0" stroke="#000" stroke-width="1.6" fill="none"/>
<path d="M241.0 583.0C242.7 580.3 246.5 572.7 251.0 567.0C255.5 561.3 265.2 552.0 268.0 549.0" stroke="#000" stroke-width="1.6" fill="none"/>
<path d="M268.0 571.0C271.5 568.2 281.2 559.3 289.0 554.5C296.8 549.7 310.7 544.1 315.0 542.0" stroke="#000" stroke-width="1.8" fill="none"/>
<path d="M478.0 433.5C480.6 433.6 490.2 433.5 493.5 434.0C496.8 434.5 497.1 435.4 498.0 436.5C498.9 437.6 499.4 440.0 499.0 440.5C498.6 441.0 496.1 439.7 495.5 439.5" stroke="#000" stroke-width="3.42" fill="none"/>
<path d="M495.5 439.5C492.4 440.2 483.2 442.2 477.0 443.5C470.8 444.8 463.3 444.9 458.0 447.5C452.7 450.1 448.1 455.7 445.0 459.0C441.9 462.3 439.1 465.0 439.5 467.5C439.9 470.0 443.2 472.4 447.5 474.0C451.8 475.6 457.3 477.3 465.0 477.0C472.7 476.7 487.4 471.1 493.5 472.0C499.6 472.9 499.2 480.3 501.5 482.5C503.8 484.7 506.5 484.6 507.5 485.0" stroke="#000" stroke-width="3.17" fill="none"/>
<path d="M488.5 441.5C484.0 442.8 467.8 446.6 461.5 449.5C455.2 452.4 453.7 456.4 451.0 459.0C448.3 461.6 446.4 464.0 445.5 465.0" stroke="#000" stroke-width="2.2" fill="none"/>
<path d="M445.5 465.0C447.2 465.7 451.9 468.1 456.0 469.0C460.1 469.9 467.7 470.2 470.0 470.5" stroke="#000" stroke-width="1.4" fill="none"/>
<path d="M452.0 457.0L450.5 453.8" stroke="#222" stroke-width="0.9" fill="none"/>
<path d="M457.5 454.9L456.0 451.7" stroke="#222" stroke-width="0.9" fill="none"/>
<path d="M463.0 452.8L461.5 449.6" stroke="#222" stroke-width="0.9" fill="none"/>
<path d="M468.5 450.7L467.0 447.5" stroke="#222" stroke-width="0.9" fill="none"/>
<path d="M474.0 448.6L472.5 445.4" stroke="#222" stroke-width="0.9" fill="none"/>
<path d="M479.5 446.5L478.0 443.3" stroke="#222" stroke-width="0.9" fill="none"/>
<path d="M485.0 444.4L483.5 441.2" stroke="#222" stroke-width="0.9" fill="none"/>
<path d="M457.0 461.5C458.3 460.3 460.0 456.8 465.0 454.5C470.0 452.2 479.5 449.8 487.0 447.5C494.5 445.2 503.2 441.6 510.0 440.5C516.8 439.4 523.7 440.2 527.5 441.0C531.3 441.8 532.8 442.9 533.0 445.0C533.2 447.1 534.8 450.5 528.5 453.5C522.2 456.5 505.2 460.7 495.5 463.0C485.8 465.3 476.4 467.8 470.0 467.5C463.6 467.2 459.2 462.5 457.0 461.5" stroke="#000" stroke-width="3.17" fill="none"/>
<path d="M514.5 437.0C517.0 436.6 525.0 434.7 529.5 434.5C534.0 434.3 538.8 434.4 541.5 436.0C544.2 437.6 546.0 440.9 546.0 444.0C546.0 447.1 543.2 452.0 541.5 454.5C539.8 457.0 539.4 458.0 535.5 459.0C531.6 460.0 520.9 460.2 518.0 460.5" stroke="#000" stroke-width="3.17" fill="none"/>
<path d="M533.0 427.5C535.0 428.2 542.0 429.8 545.0 432.0C548.0 434.2 550.8 437.5 551.0 441.0C551.2 444.5 548.0 449.7 546.0 453.0C544.0 456.3 540.2 459.7 539.0 461.0" stroke="#000" stroke-width="2.44" fill="none"/>
<path d="M466.5 431.5C467.8 430.7 471.2 427.9 474.0 426.5C476.8 425.1 478.6 424.1 483.0 423.0C487.4 421.9 494.7 420.4 500.5 420.0C506.3 419.6 513.5 419.7 518.0 420.5C522.5 421.3 525.9 424.2 527.5 425.0" stroke="#000" stroke-width="3.17" fill="none"/>
<path d="M474.5 431.0C476.8 430.4 481.8 428.5 488.0 427.5C494.2 426.5 506.2 425.0 512.0 425.0C517.8 425.0 520.8 427.1 522.5 427.5" stroke="#000" stroke-width="1.95" fill="none"/>
<path d="M478.0 428.8L479.5 424.8" stroke="#1a1a1a" stroke-width="1" fill="none"/>
<path d="M482.3 428.5L483.8 424.6" stroke="#1a1a1a" stroke-width="1" fill="none"/>
<path d="M486.6 428.2L488.1 424.3" stroke="#1a1a1a" stroke-width="1" fill="none"/>
<path d="M490.9 427.8L492.4 424.1" stroke="#1a1a1a" stroke-width="1" fill="none"/>
<path d="M495.2 427.5L496.7 423.8" stroke="#1a1a1a" stroke-width="1" fill="none"/>
<path d="M499.5 427.2L501.0 423.6" stroke="#1a1a1a" stroke-width="1" fill="none"/>
<path d="M503.8 426.9L505.3 423.3" stroke="#1a1a1a" stroke-width="1" fill="none"/>
<path d="M508.1 426.6L509.6 423.1" stroke="#1a1a1a" stroke-width="1" fill="none"/>
<path d="M512.4 426.2L513.9 422.8" stroke="#1a1a1a" stroke-width="1" fill="none"/>
<path d="M516.7 425.9L518.2 422.6" stroke="#1a1a1a" stroke-width="1" fill="none"/>
<path d="M527.5 425.0C530.4 425.8 539.2 427.3 545.0 429.5C550.8 431.7 560.5 434.8 562.5 438.0C564.5 441.2 558.6 445.8 557.0 449.0C555.4 452.2 553.7 455.7 553.0 457.0" stroke="#000" stroke-width="3.42" fill="none"/>
<path d="M495.5 467.5C496.2 468.8 498.4 472.5 500.0 475.0C501.6 477.5 504.2 481.2 505.0 482.5" stroke="#000" stroke-width="2.44" fill="none"/>
<path d="M500.5 465.0C501.4 466.3 504.2 470.4 506.0 473.0C507.8 475.6 510.2 479.2 511.0 480.5" stroke="#000" stroke-width="2.44" fill="none"/>
<path d="M500.0 470.0L505.0 476.0 511.0 466.0" stroke="#000" stroke-width="1.4" fill="none"/>
<path d="M444.0 487.5C445.3 487.2 449.4 486.5 452.0 486.0C454.6 485.5 457.5 484.2 459.5 484.5C461.5 484.8 464.4 486.8 464.0 488.0C463.6 489.2 459.5 491.3 457.0 492.0C454.5 492.7 451.2 492.8 449.0 492.0C446.8 491.2 444.8 488.2 444.0 487.5" stroke="#000" stroke-width="3.17" fill="none"/>
<path d="M457.0 492.0C457.2 493.2 454.2 498.1 458.0 499.5C461.8 500.9 472.9 500.4 480.0 500.5C487.1 500.6 494.3 501.2 500.5 500.0C506.7 498.8 511.9 495.5 517.0 493.0C522.1 490.5 528.7 486.3 531.0 485.0" stroke="#000" stroke-width="2.93" fill="none"/>
<path d="M464.0 489.8C466.7 490.0 475.1 490.8 480.0 491.0C484.9 491.2 488.2 492.0 493.5 491.0C498.8 490.0 506.3 487.6 512.0 485.0C517.7 482.4 524.9 477.1 527.5 475.5" stroke="#000" stroke-width="2.68" fill="none"/>
<path d="M462.0 494.5L462.6 499.0" stroke="#1a1a1a" stroke-width="1.1" fill="none"/>
<path d="M466.6 494.5L467.2 499.0" stroke="#1a1a1a" stroke-width="1.1" fill="none"/>
<path d="M471.2 494.5L471.8 499.0" stroke="#1a1a1a" stroke-width="1.1" fill="none"/>
<path d="M475.8 494.5L476.4 499.0" stroke="#1a1a1a" stroke-width="1.1" fill="none"/>
<path d="M480.4 494.5L481.0 499.0" stroke="#1a1a1a" stroke-width="1.1" fill="none"/>
<path d="M485.0 494.5L485.6 499.0" stroke="#1a1a1a" stroke-width="1.1" fill="none"/>
<path d="M489.6 494.5L490.2 499.0" stroke="#1a1a1a" stroke-width="1.1" fill="none"/>
<path d="M494.2 493.6L494.8 498.0" stroke="#1a1a1a" stroke-width="1.1" fill="none"/>
<path d="M498.8 492.7L499.4 497.0" stroke="#1a1a1a" stroke-width="1.1" fill="none"/>
<path d="M503.4 491.8L504.0 496.0" stroke="#1a1a1a" stroke-width="1.1" fill="none"/>
<path d="M508.0 490.9L508.6 495.0" stroke="#1a1a1a" stroke-width="1.1" fill="none"/>
<path d="M512.6 490.0L513.2 494.0" stroke="#1a1a1a" stroke-width="1.1" fill="none"/>
<path d="M569.0 436.0L569.0 443.0" stroke="#ddd" stroke-width="1.2" fill="none"/>
<path d="M574.0 436.0L574.0 443.0" stroke="#ddd" stroke-width="1.2" fill="none"/>
<path d="M566.0 447.0L578.0 447.0" stroke="#ddd" stroke-width="1.2" fill="none"/>
<path d="M560.8 460.4a7 6.300 0 1 0 14 0a7 6.300 0 1 0 -14 0" stroke="#000" stroke-width="2" fill="#e0e0e0"/>
<path d="M565.5 460.400a2.300 2.300 0 1 0 4.600 0a2.300 2.300 0 1 0 -4.600 0" stroke="#000" stroke-width="1" fill="#000"/>
<path d="M562.0 453.0C562.8 452.2 564.7 449.2 567.0 448.5C569.3 447.8 573.8 447.8 576.0 448.5C578.2 449.2 579.3 452.2 580.0 453.0" stroke="#000" stroke-width="2.2" fill="none"/>
<path d="M527.0 424.0C530.0 422.8 538.0 419.6 545.0 417.0C552.0 414.4 557.7 412.3 569.0 408.5C580.3 404.7 597.0 398.8 613.0 394.0C629.0 389.2 651.0 383.2 665.0 380.0C679.0 376.8 691.7 375.4 697.0 374.5" stroke="#000" stroke-width="3.9" fill="none"/>
<path d="M698.0 376.5C695.0 378.8 690.3 381.9 680.0 390.0C669.7 398.1 649.2 414.5 636.0 425.0C622.8 435.5 610.3 447.4 601.0 453.0C591.7 458.6 583.5 457.6 580.0 458.5" stroke="#000" stroke-width="3.66" fill="none"/>
<path d="M689.0 377.5C685.3 379.6 677.8 382.1 667.0 390.0C656.2 397.9 636.8 414.6 624.0 425.0C611.2 435.4 595.7 447.9 590.0 452.5" stroke="#000" stroke-width="2.68" fill="none"/>
<path d="M530.0 428.0C535.0 426.3 548.3 422.0 560.0 418.0C571.7 414.0 593.3 406.3 600.0 404.0" stroke="#000" stroke-width="2.93" fill="none"/>
<path d="M681.0 392.0C686.7 391.7 703.2 390.2 715.0 390.0C726.8 389.8 745.8 390.8 752.0 391.0" stroke="#000" stroke-width="3.17" fill="none"/>
<path d="M752.0 391.0C746.3 393.5 728.3 402.8 718.0 406.0C707.7 409.2 698.2 409.1 690.0 410.0C681.8 410.9 672.5 411.2 669.0 411.5" stroke="#000" stroke-width="2.93" fill="none"/>
<path d="M700.0 412.0C706.7 410.6 727.8 406.0 740.0 403.5C752.2 401.0 767.5 398.1 773.0 397.0" stroke="#000" stroke-width="3.66" fill="none"/>
<path d="M773.0 397.0C777.5 396.0 791.2 393.2 800.0 391.0C808.8 388.8 821.7 384.8 826.0 383.5" stroke="#000" stroke-width="7.93" fill="none"/>
<path d="M752.0 401.0L780.0 396.0" stroke="#000" stroke-width="3.66" fill="none"/>
<path d="M677.0 414.0C676.8 416.0 675.7 422.0 676.0 426.0C676.3 430.0 678.5 436.0 679.0 438.0" stroke="#000" stroke-width="2.93" fill="none"/>
<path d="M636.0 428.5C640.0 426.8 653.2 420.9 660.0 418.5C666.8 416.1 674.2 414.8 677.0 414.0" stroke="#000" stroke-width="2.68" fill="none"/>
<path d="M612.0 455.0C616.7 453.8 628.8 450.3 640.0 447.5C651.2 444.7 672.5 439.6 679.0 438.0" stroke="#000" stroke-width="2.68" fill="none"/>
<path d="M679.0 416.0C685.8 415.5 706.5 414.3 720.0 413.0C733.5 411.7 746.7 410.5 760.0 408.0C773.3 405.5 793.3 399.7 800.0 398.0" stroke="#000" stroke-width="2.44" fill="none"/>
<path d="M683.0 422.0C688.8 422.1 710.2 421.5 718.0 422.5C725.8 423.5 723.0 427.2 730.0 428.0C737.0 428.8 750.0 427.7 760.0 427.0C770.0 426.3 785.0 424.5 790.0 424.0" stroke="#000" stroke-width="1.95" fill="none"/>
<path d="M683.0 436.0C689.2 436.2 708.5 437.0 720.0 437.0C731.5 437.0 745.0 434.3 752.0 436.0C759.0 437.7 760.3 445.2 762.0 447.0" stroke="#000" stroke-width="2.93" fill="none"/>
<path d="M728.0 410.0C729.3 408.7 733.3 403.7 736.0 402.0C738.7 400.3 742.7 400.3 744.0 400.0" stroke="#000" stroke-width="1.4" fill="none"/>
<path d="M745.0 421.0C747.5 419.5 755.5 414.5 760.0 412.0C764.5 409.5 770.0 407.0 772.0 406.0" stroke="#000" stroke-width="1.4" fill="none"/>
<path d="M752.0 412.0C753.7 414.0 758.7 420.7 762.0 424.0C765.3 427.3 770.3 430.7 772.0 432.0" stroke="#000" stroke-width="1.4" fill="none"/>
<path d="M634.0 463.0C639.0 462.5 652.8 461.0 664.0 460.0C675.2 459.0 688.3 458.2 701.0 457.0C713.7 455.8 730.0 453.8 740.0 452.5C750.0 451.2 752.8 450.8 761.0 449.5C769.2 448.2 784.3 445.8 789.0 445.0" stroke="#000" stroke-width="3.17" fill="none"/>
<path d="M600.0 471.0C606.7 470.8 623.7 471.3 640.0 470.0C656.3 468.7 681.3 465.2 698.0 463.0C714.7 460.8 728.8 458.8 740.0 457.0C751.2 455.2 757.3 453.0 765.0 452.0C772.7 451.0 782.5 451.2 786.0 451.0" stroke="#000" stroke-width="3.66" fill="none"/>
<path d="M762.0 447.0C766.7 445.8 781.8 442.3 790.0 440.0C798.2 437.7 807.5 434.2 811.0 433.0" stroke="#000" stroke-width="2.93" fill="none"/>
<path d="M790.0 427.0L794.0 445.0" stroke="#000" stroke-width="3.66" fill="none"/>
<path d="M529.0 421.0C532.2 419.5 540.8 414.8 548.0 412.0C555.2 409.2 563.3 406.3 572.0 404.0C580.7 401.7 595.3 399.0 600.0 398.0" stroke="#000" stroke-width="3.66" fill="none"/>
<path d="M535.0 430.0C538.5 429.0 548.8 426.7 556.0 424.0C563.2 421.3 574.3 415.7 578.0 414.0" stroke="#000" stroke-width="2.68" fill="none"/>
<path d="M597.0 462.0C600.8 462.8 611.2 465.6 620.0 466.5C628.8 467.4 636.7 468.2 650.0 467.5C663.3 466.8 685.0 463.9 700.0 462.0C715.0 460.1 733.3 457.0 740.0 456.0" stroke="#000" stroke-width="4.15" fill="none"/>
<path d="M606.0 471.0C611.7 471.6 628.3 474.2 640.0 474.5C651.7 474.8 664.3 474.2 676.0 473.0C687.7 471.8 704.3 468.0 710.0 467.0" stroke="#000" stroke-width="3.9" fill="none"/>
<path d="M580.0 462.0C583.3 463.0 593.3 466.0 600.0 468.0C606.7 470.0 616.7 473.0 620.0 474.0" stroke="#000" stroke-width="2.44" fill="none"/>
<path d="M811.0 433.0C807.7 435.7 798.3 442.7 791.0 449.0C783.7 455.3 769.0 466.3 767.0 471.0C765.0 475.7 773.7 476.3 779.0 477.0C784.3 477.7 794.2 476.0 799.0 475.0C803.8 474.0 805.2 475.0 808.0 471.0C810.8 467.0 811.8 457.8 816.0 451.0C820.2 444.2 830.2 433.5 833.0 430.0" stroke="#000" stroke-width="3.17" fill="none"/>
<path d="M541.0 471.5C540.1 472.2 536.3 474.1 535.5 476.0C534.7 477.9 535.2 480.7 536.0 483.0C536.8 485.3 535.0 486.9 540.0 490.0C545.0 493.1 554.3 498.7 566.0 501.5C577.7 504.3 596.7 506.2 610.0 507.0C623.3 507.8 634.2 507.2 646.0 506.0C657.8 504.8 670.8 502.8 681.0 500.0C691.2 497.2 699.5 492.8 707.0 489.0C714.5 485.2 720.7 480.8 726.0 477.0C731.3 473.2 736.8 468.2 739.0 466.5" stroke="#000" stroke-width="3.66" fill="none"/>
<path d="M739.0 466.5C732.2 467.0 710.7 467.8 698.0 469.5C685.3 471.2 677.7 475.6 663.0 477.0C648.3 478.4 624.7 478.3 610.0 478.0C595.3 477.7 586.7 476.3 575.0 475.0C563.3 473.7 545.8 470.8 540.0 470.0" stroke="#000" stroke-width="2.93" fill="none"/>
<path d="M543.0 472.5C548.0 473.0 562.2 474.0 573.0 475.5C583.8 477.0 593.3 480.4 608.0 481.5C622.7 482.6 642.5 483.5 661.0 482.0C679.5 480.5 709.3 474.1 719.0 472.5" stroke="#000" stroke-width="2.68" fill="none"/>
<path d="M577.0 458.0C582.8 459.3 598.2 464.2 612.0 466.0C625.8 467.8 645.3 468.5 660.0 468.5C674.7 468.5 687.3 466.8 700.0 466.0C712.7 465.2 730.0 464.3 736.0 464.0" stroke="#000" stroke-width="2.68" fill="none"/>
<path d="M720.0 466.0C722.8 466.0 736.7 463.8 737.0 466.0C737.3 468.2 724.5 476.8 722.0 479.0" stroke="#000" stroke-width="1.95" fill="none"/>
<path d="M733.0 359.0C736.3 358.1 745.2 354.2 753.0 353.5C760.8 352.8 772.2 353.9 780.0 355.0C787.8 356.1 793.0 357.8 800.0 360.0C807.0 362.2 818.3 366.7 822.0 368.0" stroke="#000" stroke-width="3.17" fill="none"/>
<path d="M733.0 359.0C737.8 360.4 750.8 364.6 762.0 367.5C773.2 370.4 790.3 374.4 800.0 376.5C809.7 378.6 816.7 379.4 820.0 380.0" stroke="#000" stroke-width="2.93" fill="none"/>
<path d="M775.0 372.0C775.7 373.7 777.8 378.7 779.0 382.0C780.2 385.3 781.5 390.3 782.0 392.0" stroke="#000" stroke-width="2.44" fill="none"/>
<path d="M780.0 371.0C780.7 372.7 783.0 377.7 784.0 381.0C785.0 384.3 785.7 389.3 786.0 391.0" stroke="#000" stroke-width="2.44" fill="none"/>
<path d="M806.0 358.0C807.3 357.6 811.2 355.3 814.0 355.5C816.8 355.7 821.5 358.4 823.0 359.0" stroke="#000" stroke-width="3.17" fill="none"/>
<path d="M806.0 358.0C807.3 359.3 811.5 362.7 814.0 366.0C816.5 369.3 819.8 376.0 821.0 378.0" stroke="#000" stroke-width="2.93" fill="none"/>
<path d="M780.0 356.0C783.3 357.5 793.3 361.7 800.0 365.0C806.7 368.3 816.7 374.2 820.0 376.0" stroke="#000" stroke-width="3.9" fill="none"/>
<path d="M780.0 365.0C783.3 366.2 793.7 369.5 800.0 372.0C806.3 374.5 815.0 378.7 818.0 380.0" stroke="#000" stroke-width="3.66" fill="none"/>
<path d="M838.0 320.0C836.7 323.3 832.2 333.3 830.0 340.0C827.8 346.7 826.0 353.3 825.0 360.0C824.0 366.7 823.3 373.8 824.0 380.0C824.7 386.2 827.0 392.4 829.0 397.0C831.0 401.6 834.8 405.8 836.0 407.5" stroke="#000" stroke-width="4.39" fill="none"/>
<path d="M836.0 407.5C838.0 405.2 844.2 398.2 848.0 394.0C851.8 389.8 856.0 386.2 859.0 382.0C862.0 377.8 864.7 373.7 866.0 369.0C867.3 364.3 867.2 359.5 867.0 354.0C866.8 348.5 865.0 341.7 864.5 336.0C864.0 330.3 864.1 322.7 864.0 320.0" stroke="#000" stroke-width="2.93" fill="none"/>
<path d="M912.0 320.0C908.8 322.8 897.4 332.2 893.0 337.0C888.6 341.8 887.8 343.9 885.5 349.0C883.2 354.1 880.3 362.0 879.0 367.5C877.7 373.0 877.8 379.6 877.5 382.0" stroke="#000" stroke-width="2.44" fill="none"/>
<path d="M848.5 320.0C848.1 322.2 848.2 329.3 846.0 333.0C843.8 336.7 836.8 340.5 835.0 342.0" stroke="#000" stroke-width="1.6" fill="none"/>
<path d="M868.0 331.0L878.0 337.0" stroke="#000" stroke-width="1.2" fill="none"/>
<path d="M872.0 345.0L879.0 354.0" stroke="#000" stroke-width="1.2" fill="none"/>
<path d="M871.0 354.0L875.0 382.0 870.0 369.0" stroke="#000" stroke-width="1.4" fill="none"/>
<path d="M835.0 331.0C836.3 327.8 840.8 319.4 843.0 312.0C845.2 304.6 846.2 296.2 848.5 286.5C850.8 276.8 854.8 261.1 856.5 254.0C858.2 246.9 857.2 245.8 858.5 244.0C859.8 242.2 862.7 242.5 864.5 243.5C866.3 244.5 868.4 247.2 869.5 250.0C870.6 252.8 871.2 256.2 871.0 260.5C870.8 264.8 869.3 270.9 868.5 276.0C867.7 281.1 866.4 288.5 866.0 291.0" stroke="#000" stroke-width="2.2" fill="none"/>
<path d="M848.5 331.0C849.4 327.8 852.4 318.0 854.0 312.0C855.6 306.0 856.7 298.4 858.0 295.0C859.3 291.6 860.5 291.5 862.0 291.5C863.5 291.5 865.8 292.9 867.0 295.0C868.2 297.1 869.5 299.8 869.5 304.0C869.5 308.2 867.6 315.5 867.0 320.0C866.4 324.5 866.2 329.2 866.0 331.0" stroke="#000" stroke-width="2.2" fill="none"/>
<path d="M858.0 296.0C857.8 297.5 855.8 303.2 856.5 305.0C857.2 306.8 860.8 308.0 862.0 306.5C863.2 305.0 863.7 297.8 864.0 296.0" stroke="#000" stroke-width="1.2" fill="none"/>
<path d="M867.5 291.5C869.6 288.2 876.3 278.4 880.0 272.0C883.7 265.6 887.5 256.4 889.5 253.0C891.5 249.6 890.7 250.9 892.0 251.5C893.3 252.1 896.2 253.9 897.5 256.5C898.8 259.1 899.9 263.1 899.5 267.0C899.1 270.9 897.3 275.4 895.0 280.0C892.7 284.6 888.4 289.2 885.5 294.5C882.6 299.8 879.5 306.9 877.5 312.0C875.5 317.1 874.2 322.8 873.5 325.0" stroke="#000" stroke-width="2" fill="none"/>
<path d="M899.5 269.0C900.2 268.4 902.6 265.0 904.0 265.5C905.4 266.0 907.8 268.7 908.0 272.0C908.2 275.3 907.0 281.1 905.5 285.5C904.0 289.9 901.7 293.4 899.0 298.5C896.3 303.6 892.2 310.9 889.5 316.0C886.8 321.1 884.1 326.8 883.0 329.0" stroke="#000" stroke-width="2" fill="none"/>
<path d="M884.0 329.0C886.5 327.2 894.3 322.5 899.0 318.5C903.7 314.5 908.7 307.9 912.0 305.0C915.3 302.1 917.5 301.0 919.0 301.0C920.5 301.0 921.3 302.8 921.0 305.0C920.7 307.2 920.7 310.2 917.0 314.5C913.3 318.8 903.0 327.2 899.0 331.0C895.0 334.8 894.0 336.0 893.0 337.0" stroke="#000" stroke-width="2" fill="none"/>
<path d="M862.0 267.0L866.5 268.5" stroke="#444" stroke-width="0.9" fill="none"/>
<path d="M850.0 283.0L854.5 284.5" stroke="#444" stroke-width="0.9" fill="none"/>
<path d="M846.0 298.0L850.5 299.5" stroke="#444" stroke-width="0.9" fill="none"/>
<path d="M842.0 314.0L846.5 315.5" stroke="#444" stroke-width="0.9" fill="none"/>
<path d="M878.0 280.0L882.5 281.5" stroke="#444" stroke-width="0.9" fill="none"/>
<path d="M872.0 292.0L876.5 293.5" stroke="#444" stroke-width="0.9" fill="none"/>
<path d="M894.0 277.0L898.5 278.5" stroke="#444" stroke-width="0.9" fill="none"/>
<path d="M897.0 289.0L901.5 290.5" stroke="#444" stroke-width="0.9" fill="none"/>
<path d="M881.0 294.0L885.5 295.5" stroke="#444" stroke-width="0.9" fill="none"/>
<path d="M888.0 305.0L892.5 306.5" stroke="#444" stroke-width="0.9" fill="none"/>
<path d="M911.0 316.0L915.5 317.5" stroke="#444" stroke-width="0.9" fill="none"/>
<path d="M901.0 325.0L905.5 326.5" stroke="#444" stroke-width="0.9" fill="none"/>
<path d="M855.0 315.0L859.5 316.5" stroke="#444" stroke-width="0.9" fill="none"/>
<path d="M852.0 325.0L856.5 326.5" stroke="#444" stroke-width="0.9" fill="none"/>
<path d="M815.0 394.5C815.4 396.5 815.1 401.7 817.5 406.5C819.9 411.3 827.5 420.7 829.5 423.5" stroke="#000" stroke-width="2.68" fill="none"/>
<path d="M820.0 393.0C820.9 395.8 822.3 405.8 825.5 410.0C828.7 414.2 836.8 416.7 839.0 418.0" stroke="#000" stroke-width="2.44" fill="none"/>
<path d="M780.0 399.0C783.3 397.2 792.8 391.2 800.0 388.5C807.2 385.8 819.6 383.9 823.5 383.0" stroke="#000" stroke-width="4.15" fill="none"/>
<path d="M780.0 436.0C783.3 435.3 794.2 433.7 800.0 432.0C805.8 430.3 810.0 427.3 815.0 426.0C820.0 424.7 827.5 424.3 830.0 424.0" stroke="#000" stroke-width="2.44" fill="none"/>
<path d="M812.0 423.0L818.0 426.0 828.0 420.0" stroke="#000" stroke-width="3.17" fill="none"/>
<path d="M839.5 411.0C841.6 411.1 845.5 410.1 852.0 411.5C858.5 412.9 872.7 416.5 878.5 419.5C884.3 422.5 889.2 427.9 887.0 429.5C884.8 431.1 871.3 430.4 865.0 429.0C858.7 427.6 853.2 424.0 849.0 421.0C844.8 418.0 841.1 412.7 839.5 411.0" stroke="#000" stroke-width="2.93" fill="none"/>
<path d="M855.0 386.0C860.8 385.2 878.8 383.1 890.0 381.5C901.2 379.9 917.1 377.3 922.5 376.5" stroke="#000" stroke-width="3.66" fill="none"/>
<path d="M922.5 376.5C924.7 377.2 932.8 378.5 935.5 380.5C938.2 382.5 938.7 385.6 938.5 388.5C938.3 391.4 936.9 395.1 934.5 398.0C932.1 400.9 925.8 404.7 924.0 406.0" stroke="#000" stroke-width="3.17" fill="none"/>
<path d="M924.0 406.0C920.0 407.0 907.8 410.0 900.0 412.0C892.2 414.0 881.2 417.0 877.5 418.0" stroke="#000" stroke-width="3.42" fill="none"/>
<path d="M922.5 377.0L925.0 404.5" stroke="#000" stroke-width="2.68" fill="none"/>
<path d="M866.0 392.0C873.7 390.7 903.7 384.8 912.0 384.0C920.3 383.2 916.0 385.8 916.0 387.0C916.0 388.2 920.2 389.0 912.0 391.0C903.8 393.0 874.5 397.7 867.0 399.0" stroke="#000" stroke-width="2.68" fill="none"/>
<path d="M871.0 406.0C878.0 404.4 905.5 397.4 913.0 396.5C920.5 395.6 916.2 399.2 916.0 400.5C915.8 401.8 918.8 402.2 912.0 404.0C905.2 405.8 881.2 410.2 875.0 411.5" stroke="#000" stroke-width="2.68" fill="none"/>
<path d="M866.0 392.0L867.0 399.0" stroke="#000" stroke-width="2.44" fill="none"/>
<path d="M871.0 406.0L875.0 411.5" stroke="#000" stroke-width="2.44" fill="none"/>
<path d="M937.0 383.0C937.4 384.0 939.4 387.0 939.5 389.0C939.6 391.0 937.8 394.0 937.5 395.0" stroke="#000" stroke-width="2.2" fill="none"/>
<path d="M848.0 398.0L851.0 410.0" stroke="#000" stroke-width="2.68" fill="none"/>
<path d="M856.0 389.0L860.0 413.0" stroke="#000" stroke-width="1.95" fill="none"/>
</g></svg><!--/DRAW--></div>
<!--LEFT-->
<!-- left header row -->
<svg class="abs" style="left:0;top:48px" width="213" height="20" viewBox="0 0 213 20" fill="none" stroke="#8c8c8c" stroke-width="1">
<path d="M6.5 6.5l-3.500 3.500l3.500 3.500M10.500 6.500l-3.500 3.500l3.500 3.500M30.500 5v11M32.500 5v11M34.500 5v11"/>
<path d="M45.500 6.500l-3.500 3.500l3.500 3.500M49.500 6.500l-3.500 3.500l3.500 3.500M72.500 6l-3.500 4l3.500 4M204.500 5v11M206.500 5v11M208.500 5v11"/>
</svg>
<!-- tool palette -->
<div class="abs" style="left:1px;top:72px;width:37px;height:590px;background:#404040"></div>
<div class="abs" style="left:1px;top:72px;width:19px;height:15px;background:#383838"></div>
<div class="abs" style="left:20px;top:72px;width:18px;height:20px;background:#4f4f4f"></div>
<div class="abs" style="left:1px;top:87px;width:37px;height:5px;background:#4f4f4f"></div>
<svg class="abs" style="left:0;top:72px" width="40" height="20" viewBox="0 0 40 20" fill="none" stroke="#8a8a8a">
<path d="M6.5 3.500h7.5M6.5 6.500h7.5M6.5 9.500h7.5" stroke-width="1"/>
<path d="M27 21l11-13.500" stroke="#c8c8c8" stroke-width="3.500"/><path d="M26.500 22l2-4.500 2.500 2z" fill="#aaa" stroke="none"/>
</svg>
<svg class="abs" style="left:0;top:92px" width="40" height="575" viewBox="0 92 40 575" fill="none" stroke="#b8b8b8" stroke-width="1.300" stroke-linejoin="round" stroke-linecap="round">
<!-- pen 105 -->
<g><path d="M10.500 115.500l4.500-12.500 7.500-5 4.500 4.500-5 7.500z"/><path d="M10.500 115.500l7-7"/><path d="M22 98l2.500-2.500 4.500 4.500-2.500 2.500z" fill="#b8b8b8"/></g>
<!-- pencil 130 -->
<g transform="translate(0,25.500)"><path d="M10.500 115.500l4.500-12.500 8-7 5.500 5.500-7 8z"/><path d="M15 103l4 2 .5-3 3 .5 -.5 4.500" /><path d="M22.500 95.500l5.500 5.500-2 2.500-6-6z" fill="#b8b8b8"/></g>
<!-- brush 155 -->
<g transform="translate(0,50.500)"><path d="M10.500 115.500c1-5 2-10 6-13 3-2 6 0 7 2 1 3-1 5-4 7-3 2-6 2.500-9 4z"/><path d="M13 112.500l6-7"/><path d="M21.500 100.500l3.500-4.500 4 4-4.500 3.500z" fill="#b8b8b8"/></g>
<!-- eraser 180 -->
<g><path d="M11 180.500l10.500-9.500 6.500 7-10.500 9.500z" fill="#b8b8b8"/><path d="M11 180.500l4.500 5.500 3-.5" /><path d="M14 189.500h14" /><path d="M11.500 181l5 5.500 3.500-3-5.500-5.500z" fill="#404040" stroke="#b8b8b8"/></g>
<!-- airbrush 205 -->
<g><rect x="15.500" y="206.500" width="13" height="9" rx="2"/><path d="M17 210.500h10.500" stroke-width="2.500"/><path d="M20 206v-4h5v4" fill="#b8b8b8"/><path d="M10 199.500h.5M13 199.500h.5M16 199.500h.5M10 202.500h.5M13 202.500h.5M16 202.500h.5M10 205.500h.5M13 205.500h.5M11.500 208.500h.5M10 197h.5" stroke-width="1.400"/></g>
<!-- sparkle 229 -->
<g fill="#b8b8b8" stroke="none"><path d="M18 219c.6 5 1.500 6.500 7.500 8-6 1.500-6.900 3-7.500 8-.6-5-1.500-6.500-7.500-8 6-1.500 6.900-3 7.500-8z"/><path d="M24.500 231c.4 2.500 1 3.300 4 4-3 .7-3.600 1.500-4 4-.4-2.500-1-3.300-4-4 3-.7 3.600-1.500 4-4z"/></g>
<!-- blend 254 -->
<defs><linearGradient id="gb" x1="0" y1="0" x2="0" y2="1"><stop offset="0" stop-color="#cfcfcf"/><stop offset="1" stop-color="#6a6a6a"/></linearGradient>
<linearGradient id="gg" x1="0" y1="0" x2="1" y2="1"><stop offset="0" stop-color="#d0d0d0"/><stop offset="1" stop-color="#4a4a4a"/></linearGradient></defs>
<path d="M15 245.500c-2 4-5 8-5 11.500 0 3 2 5 4.500 5 2 0 3.500-1 4.500-2.500 1 1.500 2.500 2.500 4.500 2.500 2.500 0 4.500-2 4.500-5 0-3.500-3-7.500-5-11.500-1.500 2.500-3 5-4 7-1-2-2.500-4.500-4-7z" fill="url(#gb)" stroke="none"/>
<!-- grid 280 -->
<g stroke-width="1.200"><rect x="10.500" y="270.500" width="17" height="17" rx="3.500"/><path d="M10.500 276.500h17M10.500 282h17M16 270.500v17M22 270.500c-4 5-4 12 0 17M22.500 279h5"/></g>
<path d="M5 293.500h30" stroke="#6e6e6e" stroke-width="1"/>
<!-- lasso 307 -->
<g><path d="M20 313c-5 1-9-1.500-9-6 0-4.500 4-8 9.500-8" /><path d="M20.500 299c4.500 0 7.500 2.500 7.500 6 0 3-2.500 6-6 7.500" stroke-dasharray="1.500 2"/><circle cx="15.500" cy="311.500" r="2.300"/><path d="M17.500 313.500c0 2.500-3 4-7 4"/></g>
<!-- wand 332 -->
<g><path d="M10.500 342.500l8-8.500" stroke-width="1.500"/><path d="M21.500 322v5.500M21.500 334v5M15 330.500h5M24 330.500h5M17 326l3 3M26 326l-3 3M26 335l-3-3M17 335l2.500-2.500" stroke-width="1.600"/><circle cx="21.500" cy="330.500" r="2.200" fill="#b8b8b8"/></g>
<!-- fill 357 -->
<g fill="#c4c4c4" stroke="none"><path d="M19.500 347.500l9 9-9 9-9-9z"/><path d="M10.500 356.500c-1.500 2-1.500 4-.5 5.500 1-1 1.500-2.500.5-5.500z"/><path d="M13 354l6.500-5.500 6.500 5.500z" fill="#404040"/><path d="M14 353.500l5.500-4.500 5.500 4.500z" fill="none" stroke="#c4c4c4" stroke-width="1"/></g>
<!-- gradient 382 -->
<rect x="11.500" y="374.500" width="15" height="15" rx="1.500" fill="url(#gg)" stroke="#bdbdbd" stroke-width="1"/>
<path d="M5 396.500h30" stroke="#6e6e6e" stroke-width="1"/>
<!-- 3D 410 -->
<g stroke-width="1.100"><path d="M10.500 405.500l6-3 6.500 2.500v8M10.500 405.500v9l6 3.500M10.500 405.500l6 3 6.500-3.500M16.500 408.500v9.500"/><path d="M20 411l8 4.500-3.500.5 2 4-1.500.8-2-4-2.500 2.500z" fill="#c8c8c8" stroke="none"/></g>
<!-- line 436 -->
<path d="M10.500 444.500l17-17" stroke-width="1.300"/>
<!-- A 461 -->
<text x="19" y="469.500" font-family="Liberation Sans, sans-serif" font-size="23" text-anchor="middle" fill="#c4c4c4" stroke="none">A</text>
<!-- balloon 486 -->
<g><ellipse cx="19" cy="485.500" rx="8.500" ry="6.500"/><path d="M13.500 490.500l-1 3.500 4.500-2.500" fill="#404040"/></g>
<!-- frame 511 -->
<path d="M12 503.500h15.500l-14.500 14z" stroke-width="2" stroke-linejoin="miter"/>
<!-- correct line 536 -->
<rect x="7.500" y="524.500" width="23" height="23" rx="1.500" fill="#65708c" stroke="#8592b6" stroke-width="1"/>
<g stroke="#cfd3de" stroke-width="1.200"><path d="M12.500 528v17M12.500 528.500h15" /><rect x="10.500" y="526.500" width="4" height="4" fill="#cfd3de" stroke="none"/><path d="M16 531.500l12 4.500-5.500 2-2 5.500z" fill="#cfd3de" stroke="none"/></g>
<!-- hand 560 -->
<g stroke="#c4c4c4" stroke-width="2.300" stroke-linecap="round"><path d="M15 562v-7.500M18 561v-9.500M21 561v-9M24 562.500v-6.500"/><path d="M13.500 565l-2.500-3.500" stroke-width="2.500"/></g>
<path d="M13.800 560h11.400v4c0 3.500-1.500 6-4 6.500h-3.500c-2-.5-3-2-4-4z" fill="#c4c4c4" stroke="none"/>
<!-- eyedropper 585 -->
<g><path d="M10.500 594.500l2-5 9-9 2.500 2.500-9 9z"/><path d="M21 577.500l5.500 5.500" stroke-width="2.200"/><path d="M22.500 579l2.500-3c1-1 3 1 2 2l-3 2.500z" fill="#b8b8b8"/></g>
</svg>
<!-- colour swatches in tool palette -->
<div class="abs" style="left:1px;top:598px;width:37px;height:64px;background:#484848"></div>
<div class="abs" style="left:16px;top:611px;width:22px;height:22px;border:1px solid #6a6a6a;border-radius:3px;background:#484848"></div>
<div class="abs" style="left:18px;top:613px;width:18px;height:18px;background:#b98aff"></div>
<div class="abs" style="left:2px;top:599px;width:23px;height:24px;border:2px solid #8ea0d6;border-radius:4px;background:#000"></div>
<div class="abs" style="left:2px;top:635px;width:35px;height:13px;border:1px solid #6a6a6a;border-radius:4px;background:#484848"></div>
<svg class="abs" style="left:5px;top:638px" width="29" height="7" viewBox="0 0 29 7"><rect width="29" height="7" fill="#fff"/><path d="M0 3.500h4v3.500h-4zM4 0h4v3.500h-4zM8 3.500h4v3.500h-4zM12 0h4v3.500h-4zM16 3.500h4v3.500h-4zM20 0h4v3.500h-4zM24 3.500h5v3.500h-5z" fill="#bbb"/></svg>
<!-- brush size palette -->
<div class="abs" style="left:1px;top:667px;width:37px;height:100px;background:#404040"></div>
<div class="abs" style="left:1px;top:667px;width:19px;height:15px;background:#383838"></div>
<div class="abs" style="left:20px;top:667px;width:18px;height:20px;background:#4f4f4f"></div>
<div class="abs" style="left:1px;top:682px;width:37px;height:5px;background:#4f4f4f"></div>
<svg class="abs" style="left:0;top:667px" width="40" height="20" viewBox="0 0 40 20" fill="none" stroke="#8a8a8a">
<path d="M6.5 3.500h7.5M6.5 6.500h7.5M6.5 9.500h7.5" stroke-width="1"/>
<path d="M31.500 3v14M36.500 3v14" stroke="#c8c8c8" stroke-width="1.200"/><rect x="30" y="10" width="3" height="4" fill="#c8c8c8" stroke="none"/><rect x="35" y="5" width="3" height="4" fill="#c8c8c8" stroke="none"/>
</svg>
<div class="abs" style="left:5px;top:689px;width:28px;height:28px;border-radius:50%;background:#333"></div>
<div class="abs" style="left:5px;top:739px;width:28px;height:28px;border-radius:50%;background:#333"></div>
<div class="abs" style="left:0;top:692px;width:38px;text-align:center;font-size:12px;line-height:13.500px;color:#e6e6e6;letter-spacing:-0.3px">15.8<br>px</div>
<!--LEFT2-->
<!-- SUB TOOL panel -->
<div class="abs" style="left:40px;top:72px;width:172px;height:273px;background:#404040"></div>
<div class="abs" style="left:40px;top:72px;width:19px;height:15px;background:#383838"></div>
<div class="abs" style="left:128px;top:72px;width:84px;height:15px;background:#383838"></div>
<div class="abs" style="left:59px;top:72px;width:69px;height:20px;background:#4f4f4f"></div>
<div class="abs" style="left:40px;top:87px;width:172px;height:5px;background:#4f4f4f"></div>
<svg class="abs" style="left:40px;top:72px" width="90" height="20" viewBox="40 0 90 20" fill="none" stroke="#8a8a8a">
<path d="M45.5 3.500h8M45.5 6.500h8M45.5 9.500h8" stroke-width="1"/>
<g stroke="#c8c8c8"><path d="M68.500 14l9.500-11" stroke-width="3"/><path d="M66 17l2-4 2.500 2z" fill="#c8c8c8" stroke="none"/><path d="M73.500 9.500h7v7.500h-7zM73.500 13h7M77 17v0" stroke-width="1.100" fill="#4f4f4f"/></g>
</svg>
<div class="abs" style="left:86px;top:76px;font-size:10.5px;color:#d6d6d6;letter-spacing:-0.5px">Sub Tool</div>
<!-- group buttons -->
<div class="abs" style="left:41px;top:92px;width:170px;height:26px;background:#383838;border:1px solid #333"></div>
<div class="abs" style="left:42px;top:93px;width:83px;height:24px;background:#65708c;border-radius:2px"></div>
<div class="abs" style="left:127px;top:93px;width:83px;height:24px;background:#4f4f4f;border-radius:2px"></div>
<svg class="abs" style="left:42px;top:93px" width="170" height="24" viewBox="42 93 170 24" fill="none" stroke="#cfd3de" stroke-width="1.200">
<path d="M47.500 97v17M47.500 98h15"/><rect x="45" y="95.500" width="5" height="5" fill="#cfd3de" stroke="none"/><path d="M51 101.500l11.500 4.500-5 2-2.500 5.500z" fill="#cfd3de" stroke="none"/>
<g stroke="#c4c4c4"><path d="M139.500 96v7" stroke-width="1.800"/><path d="M134.500 103.500h10l3 9h-16.500z" stroke-linejoin="round"/><path d="M132 111.500h15" stroke-width="1.800"/><path d="M138 110h.5M140.500 108.500h.5M141.500 110.500h.5" stroke-width="1"/></g>
</svg>
<div class="abs" style="left:66px;top:98px;font-size:11.5px;color:#e2e4ea;letter-spacing:-0.4px">Correct line</div>
<div class="abs" style="left:152px;top:98px;width:58px;overflow:hidden;white-space:nowrap;font-size:11.5px;color:#dcdcdc;letter-spacing:-0.45px;-webkit-mask-image:linear-gradient(90deg,#000 70%,transparent 98%);mask-image:linear-gradient(90deg,#000 70%,transparent 98%)">Remove dust</div>
<!-- list -->
<div class="abs" style="left:41px;top:118px;width:157px;height:206px;background:#2c2c2c"></div>
<div class="abs stb" style="top:119px;height:29px"></div><div class="abs stb" style="top:149px"></div><div class="abs stb" style="top:178px"></div><div class="abs stb" style="top:207px"></div><div class="abs stb" style="top:236px;background:#5f6b89"></div><div class="abs stb" style="top:265px"></div><div class="abs stb" style="top:294px"></div>
<svg class="abs" style="left:41px;top:120px" width="157" height="204" viewBox="41 119 157 204" fill="none" stroke="#b8b8b8" stroke-width="1.200">
<!-- control point -->
<path d="M48.500 126v16M48.500 127h14.500"/><rect x="46" y="124.500" width="5" height="5" fill="#b8b8b8" stroke="none"/><path d="M52 130.500l11.500 4.500-5 2-2.500 5.500z" fill="#b8b8b8" stroke="none"/>
<!-- pinch -->
<g><path d="M48.500 169c2-5 4-8 7-9.500 3 1.500 4.500 4.500 6 9.500" /><rect x="46" y="167.500" width="4.500" height="4.500" fill="#b8b8b8" stroke="none"/><rect x="59.500" y="167.500" width="4.500" height="4.500" fill="#b8b8b8" stroke="none"/><path d="M53 160l2-6c2-1.500 5-1 7 .5-.5 3-2.500 5.500-6 6z" fill="#b8b8b8" stroke="none"/></g>
<!-- stroke previews -->
<g id="wv1"><path d="M66 186c10-6 22-5 35-.5 14 5.500 34 5.500 55.500-3" stroke="#fff" stroke-width="10.500" stroke-linecap="round"/></g>
<path d="M66 215c10-6 22-5 35-.5 14 5.500 34 5.500 55.500-3" stroke="#fff" stroke-width="10.500" stroke-linecap="round"/>
<path d="M66 244c10-6 22-5 35-.5 14 5.500 34 5.500 55.500-3" stroke="#fff" stroke-width="10.500" stroke-linecap="round"/>
<g stroke="none">
<rect x="44" y="179.500" width="22" height="21" rx="5" fill="#a6a6a6"/><rect x="44" y="208.500" width="22" height="21" rx="5" fill="#a6a6a6"/><rect x="44" y="237.500" width="22" height="21" rx="5" fill="#b2b2b2"/>
<path d="M47 199c2-8 8-14 14-14 3 4 3 10 0 14z" fill="#c9c9c9"/><path d="M47 228c2-8 8-14 14-14 3 4 3 10 0 14z" fill="#c9c9c9"/><path d="M47 257c2-8 8-14 14-14 3 4 3 10 0 14z" fill="#c9c9c9"/>
</g>
<g stroke="#3c3c3c" stroke-width="2.600" stroke-linecap="round"><path d="M54 196l7-13M54 225l7-13M54 254l7-13"/></g>
<g fill="#3c3c3c" stroke="none"><path d="M52 199.500l1.500-4 2 1.500zM52 228.500l1.500-4 2 1.500zM46.500 252l6 3-6 3z"/></g>
<path d="M47 199h17M47 228h17M52 255.500h12" stroke="#555" stroke-width="0.800"/>
<!-- redraw vector line -->
<g><path d="M52 275.500c-3 0-5 2.500-4.500 5 .5 3 4 3.500 6.500 1l3-3M54 281.500l9 5"/><path d="M55 276l2-6c2-1.500 5-1 7 .5-.5 3-2.500 5.500-6 6z" fill="#b8b8b8" stroke="none"/></g>
<!-- redraw width -->
<g><path d="M47 307l6.500 3-6.500 3z" fill="#b8b8b8" stroke="none"/><path d="M52 311.500h13M53 310l3-4"/><path d="M55 306l2-6c2-1.500 5-1 7 .5-.5 3-2.500 5.500-6 6z" fill="#b8b8b8" stroke="none"/></g>
</svg>
<div class="abs sti" style="top:120px"><span>Control point</span></div>
<div class="abs sti" style="top:149px"><span>Pinch vector line</span></div>
<div class="abs sti" style="top:178px"><i class="lb" style="width:92px"></i><span>Simplify vector line</span></div>
<div class="abs sti" style="top:207px"><i class="lb" style="width:101px"></i><span>Connect vector lines</span></div>
<div class="abs sti" style="top:236px"><i class="lb" style="width:80px;background:rgba(165,165,165,.6);border-radius:2px;right:2px"></i><span>Adjust line width</span></div>
<div class="abs sti" style="top:265px"><span>Redraw vector line</span></div>
<div class="abs sti" style="top:294px"><span>Redraw vector line width</span></div>
<!-- sub tool scrollbar -->
<div class="abs" style="left:199px;top:118px;width:13px;height:206px;background:#404040"></div>
<div class="abs" style="left:200px;top:120px;width:11px;height:12px;background:#4f4f4f;border-radius:2px"></div>
<div class="abs" style="left:200px;top:311px;width:11px;height:12px;background:#4f4f4f;border-radius:2px"></div>
<div class="abs" style="left:201px;top:133px;width:8px;height:148px;background:#5a5a5a;border-radius:4px"></div>
<svg class="abs" style="left:200px;top:120px" width="11" height="204" viewBox="0 0 11 204" fill="none" stroke="#c8c8c8" stroke-width="1.200"><path d="M3 7.500l2.500-2.500 2.500 2.500M3 196l2.500 2.500 2.500-2.500"/></svg>
<!-- sub tool bottom bar -->
<div class="abs" style="left:40px;top:325px;width:172px;height:20px;background:#4f4f4f"></div>
<svg class="abs" style="left:40px;top:325px" width="172" height="20" viewBox="40 325 172 20" fill="none" stroke="#c4c4c4" stroke-width="1.100">
<rect x="46" y="331" width="9.500" height="9.500" rx="1.500" fill="#8c8c8c" stroke="#a8a8a8"/><rect x="43.500" y="328.500" width="9.500" height="9.500" rx="1.500" fill="#4f4f4f"/><path d="M45.500 333l2.500 2.500 4.500-5"/>
<rect x="156.500" y="329.500" width="12" height="12" rx="1.500"/><path d="M162.500 331v7M160 335.500l2.500 2.500 2.500-2.500"/>
<rect x="175.500" y="328.500" width="9" height="9" rx="1.500"/><rect x="178.500" y="331.500" width="10" height="10" rx="1.500" fill="#4f4f4f"/><path d="M183.500 334v5M181 336.500h5"/>
<path d="M197.500 331.500h9l-.8 10h-7.400zM196 331.500h12M200 329.500h4M200.500 333.500v6M203.500 333.500v6"/>
</svg>
<!-- TOOL PROPERTY panel -->
<div class="abs" style="left:40px;top:350px;width:172px;height:236px;background:#404040"></div>
<div class="abs" style="left:40px;top:350px;width:19px;height:15px;background:#383838"></div>
<div class="abs" style="left:178px;top:350px;width:34px;height:15px;background:#383838"></div>
<div class="abs" style="left:59px;top:350px;width:89px;height:20px;background:#4f4f4f"></div>
<div class="abs" style="left:149px;top:350px;width:29px;height:15px;background:#444;border:1px solid #4f4f4f;border-bottom:none"></div>
<div class="abs" style="left:40px;top:365px;width:172px;height:5px;background:#4f4f4f"></div>
<svg class="abs" style="left:40px;top:350px" width="140" height="20" viewBox="40 350 140 20" fill="none" stroke="#8a8a8a">
<path d="M45.5 353.500h8M45.5 356.500h8M45.5 359.500h8" stroke-width="1"/>
<g stroke="#c8c8c8" stroke-width="1.100"><path d="M65 357.500h16M65 363h16"/><circle cx="71" cy="357.500" r="1.800" fill="#c8c8c8"/><circle cx="76" cy="363" r="1.800" fill="#c8c8c8"/></g>
<g stroke="#787878" stroke-width="1.100"><path d="M156.500 364.500c-2-3 0-7 3.500-7.500 2-3 7-3 9 0 3 .5 3.500 5 1.500 7.500"/><path d="M157 361.500h10M164.500 359l3 2.500-3 2.500"/></g><rect x="148" y="365" width="64" height="5" fill="#4f4f4f" stroke="none"/>
</svg>
<div class="abs" style="left:87px;top:354px;font-size:10.5px;color:#d6d6d6;letter-spacing:-0.5px">Tool Property</div>
<!-- preview -->
<div class="abs" style="left:41px;top:370px;width:170px;height:38px;background:#4f4f4f;border:1px solid #383838"></div>
<div class="abs" style="left:41px;top:370px;width:85px;height:38px;background:#b4b4b4"></div>
<svg class="abs" style="left:41px;top:370px" width="170" height="38" viewBox="41 370 170 38" fill="none"><path d="M54 400C65 388 80 382 93 383S130 397.500 152 397.500S185 388 194.500 378" stroke="#fff" stroke-width="14.500" stroke-linecap="round"/>
<g><path d="M194 398v-3.500c0-4 5.500-4 5.500 0" stroke="#c4c4c4" stroke-width="1.200"/><rect x="196" y="396.500" width="8" height="6" fill="#c4c4c4"/></g></svg>
<div class="abs" style="left:42px;top:371px;width:80px;height:15px;background:rgba(112,112,112,.62);border-radius:2px"></div>
<div class="abs" style="left:42px;top:372px;font-size:11.5px;color:#f0f0f0;letter-spacing:-0.5px">Adjust line width</div>
<!-- radio list -->
<div class="rl abs" style="top:412px"><i class="rd"></i><span>Thicken</span><i class="sl"></i></div>
<div class="rl abs" style="top:441px"><i class="rd" style="border-color:#c8c8c8"><b></b></i><span>Narrow</span><i class="sl" style="border-top-color:#404040;border-right-color:#404040"><b></b></i></div>
<div class="rl abs" style="top:470px"><i class="rd"></i><span>Scale up width</span><i class="sl"></i></div>
<div class="rl abs" style="top:499px"><i class="rd"></i><span style="letter-spacing:-1.03px">Scale down width</span><i class="sl"></i></div>
<div class="rl abs" style="top:528px"><i class="rd"></i><span>Fix width</span><i class="sl"></i></div>
<div class="abs" style="left:45px;top:449px;width:11px;height:11px;border:1px solid #8a8a8a;border-radius:1.500px"></div>
<svg class="abs" style="left:45px;top:449px" width="11" height="11" viewBox="0 0 11 11" stroke="#dcdcdc" stroke-width="1.200"><path d="M5.500 2.500v6M2.500 5.500h6"/></svg>
<div class="abs" style="left:152px;top:448px;font-size:11.5px;color:#e2e2e2;letter-spacing:-0.5px">1.0</div>
<svg class="abs" style="left:168px;top:448px" width="11" height="16" viewBox="0 0 11 16" fill="none" stroke="#d0d0d0" stroke-width="1.200"><path d="M2 6l3.500-3.500 3.500 3.500M2 10l3.500 3.500 3.500-3.500"/></svg>
<div class="abs" style="left:51px;top:555px;width:144px;height:1px;background:#777"></div>
<div class="abs" style="left:57px;top:560px;width:14px;height:5px;background:#505050;border:1px solid #666;border-bottom:none"></div>
<div class="abs" style="left:75px;top:561px;width:76px;height:4px;overflow:hidden;font-size:12px;line-height:12px;color:#bdbdbd;letter-spacing:-0.3px">Process whole line</div>
<!-- tp scrollbar -->
<div class="abs" style="left:200px;top:410px;width:11px;height:12px;background:#4f4f4f;border-radius:2px"></div>
<div class="abs" style="left:200px;top:552px;width:11px;height:12px;background:#4f4f4f;border-radius:2px"></div>
<div class="abs" style="left:201px;top:423px;width:8px;height:102px;background:#5a5a5a;border-radius:4px"></div>
<svg class="abs" style="left:200px;top:410px" width="11" height="155" viewBox="0 0 11 155" fill="none" stroke="#c8c8c8" stroke-width="1.200"><path d="M3 7.500l2.500-2.500 2.500 2.500M3 147l2.500 2.500 2.500-2.500"/></svg>
<!-- tp bottom bar -->
<div class="abs" style="left:40px;top:565px;width:172px;height:21px;background:#4f4f4f"></div>
<svg class="abs" style="left:170px;top:566px" width="42" height="20" viewBox="170 566 42 20" fill="none" stroke="#b4b4b4" stroke-width="1.100">
<path d="M179 570.500a6 6 0 1 0 3.500 0" /><path d="M181.500 569.500v6.500"/><circle cx="181.500" cy="576.500" r="1.500" fill="#b4b4b4"/>
<path d="M197 570c2.500-1.500 5.500 0 5.500 3 0 .8-.3 1.500-.6 2l5.500 5.500-2 2-5.500-5.500c-2 .8-4.500 0-5.500-2.500l3 1 1.500-2z" />
</svg>
<!-- COLOR panel -->
<div class="abs" style="left:40px;top:590px;width:172px;height:177px;background:#4f4f4f"></div>
<div class="abs" style="left:40px;top:590px;width:19px;height:15px;background:#383838"></div>
<div class="abs" style="left:88px;top:590px;width:124px;height:15px;background:#383838"></div>
<div class="abs tb2" style="left:88px"></div><div class="abs tb2" style="left:118px"></div><div class="abs tb2" style="left:148px"></div><div class="abs tb2" style="left:178px;width:23px"></div>
<div class="abs" style="left:201px;top:590px;width:11px;height:14px;background:#4f4f4f;border:1px solid #777;border-radius:2px"></div>
<svg class="abs" style="left:40px;top:590px" width="172" height="16" viewBox="40 590 172 16" fill="none" stroke="#8a8a8a" stroke-width="1">
<path d="M45.5 593.500h8M45.5 596.500h8M45.5 599.500h8"/>
<circle cx="73" cy="600.500" r="6.500" stroke="#d0d0d0" stroke-width="1.200"/><rect x="70" y="597.500" width="6" height="6" rx="1" fill="#c8c8c8" stroke="none"/>
<g stroke="#747474"><rect x="96.500" y="596.500" width="12" height="10"/><rect x="99" y="599" width="3.500" height="3.500" fill="#747474"/><path d="M102.500 602.500h6v4h-6z" fill="#666"/></g>
<g stroke="#747474"><path d="M126 598.500h13M126 603.500h13"/><rect x="128" y="597" width="4" height="3" fill="#747474"/><rect x="133" y="602" width="4" height="3" fill="#747474"/></g>
<path d="M156 606c1-4 2.500-7 4-9 1 2 2 3.500 3 5 1-1.500 2-3 3-5 1.500 2 3 5 4 9z" fill="#6e6e6e" stroke="none"/>
<g stroke="#747474"><rect x="186.500" y="597.500" width="13" height="9"/><path d="M189 597.500v9M197 597.500v9M186.500 600.500h2.500M186.500 603.500h2.500"/></g>
<path d="M204 596l2.500 2.500 2.500-2.500" stroke="#c8c8c8" stroke-width="1.200"/>
</svg>
<div class="abs" style="left:57px;top:611px;width:138px;height:138px;border-radius:50%;background:conic-gradient(from 0deg,#ffee00,#66e000 30deg,#00e020 60deg,#00e6a0 95deg,#00e6e6 120deg,#009cff 150deg,#0000ff 180deg,#8a00ff 215deg,#ff00e6 245deg,#ff0060 275deg,#ff0000 300deg,#ff8000 330deg,#ffee00 360deg)"></div>
<div class="abs" style="left:68px;top:622px;width:116px;height:116px;border-radius:50%;background:#4f4f4f"></div>
<div class="abs" style="left:90px;top:644px;width:72px;height:71px;background:#00a0ff"></div>
<div class="abs" style="left:90px;top:644px;width:72px;height:71px;background:linear-gradient(90deg,#fff,rgba(255,255,255,0))"></div>
<div class="abs" style="left:90px;top:644px;width:72px;height:71px;background:linear-gradient(180deg,rgba(0,0,0,0),#000)"></div>
<svg class="abs" style="left:80px;top:705px" width="100" height="40" viewBox="80 705 100 40" fill="none"><circle cx="90" cy="716" r="3.800" stroke="#000" stroke-width="2.200"/><circle cx="90" cy="716" r="3.800" stroke="#fff" stroke-width="1.100"/>
<g transform="rotate(50 166.300 728.300)"><rect x="160.500" y="725.300" width="11.500" height="6" fill="#1e9cff" stroke="#fff" stroke-width="1.300"/></g></svg>
<!-- mini swatches -->
<div class="abs" style="left:51px;top:732px;width:17px;height:17px;border:1px solid #6a6a6a;border-radius:3px"></div>
<div class="abs" style="left:53px;top:734px;width:13px;height:13px;background:#b98aff"></div>
<div class="abs" style="left:40px;top:722px;width:20px;height:20px;border:2px solid #8ea0d6;border-radius:4px;background:#000"></div>
<div class="abs" style="left:41px;top:751px;width:28px;height:12px;border:1px solid #7a7a7a;border-radius:4px"></div>
<svg class="abs" style="left:44px;top:754px" width="22" height="6" viewBox="0 0 22 6"><rect width="22" height="6" fill="#fff"/><path d="M0 3h3.500v3h-3.500zM3.500 0h3.500v3h-3.500zM7 3h3.500v3h-3.500zM10.500 0h3.500v3h-3.500zM14 3h3.500v3h-3.500zM17.500 0h4.500v3h-4.500z" fill="#bbb"/></svg>
<!-- HSV -->
<div class="abs hsvb" style="left:89px">H</div><div class="abs hsvb" style="left:121px">S</div><div class="abs hsvb" style="left:153px">V</div>
<div class="abs hsvt" style="left:99px;width:20px">200</div><div class="abs hsvt" style="left:128px;width:20px">0</div><div class="abs hsvt" style="left:160px;width:20px">0</div>
<svg class="abs" style="left:190px;top:744px" width="18" height="18" viewBox="0 0 18 18" fill="none" stroke="#c4c4c4" stroke-width="1.100"><circle cx="9" cy="9" r="7"/><path d="M7 5l6 4-6 4z"/></svg>
<!--/LEFT2-->
<!--RIGHT-->
<!-- right header -->
<svg class="abs" style="left:1104px;top:48px" width="260" height="20" viewBox="1104 48 260 20" fill="none" stroke="#8c8c8c" stroke-width="1">
<path d="M1111.500 54.500l-3.500 3.500 3.500 3.500M1115.500 54.500l-3.500 3.500 3.500 3.500M1123.500 53v11M1125.500 53v11M1127.500 53v11M1332 54l3.500 4-3.500 4M1353.500 54.500l3.500 3.500-3.500 3.500M1357.500 54.500l3.500 3.500-3.500 3.500"/>
</svg>
<!-- NAVIGATOR -->
<div class="abs" style="left:1120px;top:72px;width:244px;height:168px;background:#4f4f4f"></div>
<div class="abs" style="left:1120px;top:72px;width:19px;height:15px;background:#383838"></div>
<div class="abs" style="left:1212px;top:72px;width:152px;height:15px;background:#383838"></div>
<div class="abs tb3" style="left:1213px;top:72px"></div><div class="abs tb3" style="left:1243px;top:72px"></div><div class="abs tb3" style="left:1273px;top:72px"></div>
<svg class="abs" style="left:1120px;top:72px" width="190" height="16" viewBox="1120 72 190 16" fill="none" stroke="#8a8a8a" stroke-width="1">
<path d="M1126 75.500h7.5M1126 78.500h7.5M1126 81.500h7.5"/>
<g stroke="#c8c8c8" stroke-width="1.100"><rect x="1146.500" y="78.500" width="11" height="8" rx="1"/><rect x="1149.500" y="76.500" width="11" height="8" rx="1" fill="#4f4f4f"/><rect x="1151.500" y="78.500" width="7" height="4" fill="#c8c8c8" stroke="none"/></g>
<g stroke="#747474"><rect x="1222.500" y="76.500" width="11" height="11"/><rect x="1225" y="76.500" width="6" height="6" fill="#666"/></g>
<g stroke="#747474"><circle cx="1258" cy="84" r="6.500"/><path d="M1252 82c4-2 8-2 12 0"/></g>
<g stroke="#747474"><circle cx="1288" cy="84" r="6.500"/><path d="M1288 81v6M1288 78.500v1" stroke-width="1.400"/></g><rect x="1212" y="87" width="152" height="4" fill="#4f4f4f" stroke="none"/>
</svg>
<div class="abs" style="left:1167px;top:76px;font-size:10.5px;color:#d6d6d6;letter-spacing:-0.5px">Navigator</div>
<div class="abs" style="left:1120px;top:91px;width:244px;height:107px;background:#2b2b2b"></div>
<div class="abs" style="left:1203px;top:92px;width:79px;height:105px;background:#fff"></div>
<svg class="abs" style="left:1203px;top:92px" width="79" height="105" viewBox="1203 92 79 105" fill="none" stroke="#7a7a7a" stroke-width="0.800" stroke-linecap="round">
<circle cx="1228" cy="116.500" r="3"/><path d="M1225 114c2-1.500 5-1.500 6.500 0" stroke="#555"/>
<path d="M1226 120l-.5 3c-1.500 1.500-2.500 4-2 6l.2 6M1230.500 120l.8 2.500c1.500 2 2.500 6 2.400 10.500l1.300 3M1223.500 134.500c4 1 8 1 11.500 0M1224 129c3 1.500 6 1.500 9 0"/>
<path d="M1224 123.500l-6 4.500-7 2.500c-1 0-1.500 1-.5 1.500l8-1.500 5.500-3.500"/>
<path d="M1231.600 122.300l8-2.300 9-2 8-1.500M1233 126l8-3.500 8-2.500 8-3.500M1256 114l1 2.500 1.500-1.500"/>
<path d="M1240 121.500l15-4M1241 120l13-3.500M1242 122.500l12-3.500" stroke="#444" stroke-width="0.800"/>
<path d="M1223 136c-2 5-4 9-4.300 14-.5 7 0 14 0 20.500M1229.400 139.500c-2.500 7-5 13-5.700 19.500-.5 4-1 8-1.700 12M1218.700 170.500c1 .8 2.500.8 3.500.5"/>
<path d="M1235 136c2.500 4.500 4.500 9 6 14 1.500 5.500 3 11 3.500 16l.5 10M1228.700 147.500c2 5 4.500 9.500 6.300 14.300 1.500 4 3 8 4.500 11.200M1239 172c2 .8 4 .8 6 0M1239.500 176c2 .8 4 .5 5.500 0"/>
<path d="M1218.500 172l-3 3-7 3.500c-1.500 1-.5 2.500 1.500 2.500 4 0 8-.5 12-1.500l.5-7M1209 180c4 .5 8 0 12.500-1"/>
<path d="M1240 177l-4 5-6.500 6c-1 1.500 0 3 2 4 3 1.500 8 1.500 12 0 3-1 6-2.500 7.500-4l-1.500-6-3.500-2.500M1230 190c5 2 13 1 20-3M1246 180l2 4"/>
</svg>
<div class="abs" style="left:1232px;top:108px;width:31px;height:22px;border:2px solid #f00"></div>
<!-- nav controls -->
<div class="abs nsl" style="left:1125px;top:205px"></div>
<div class="abs nsl" style="left:1125px;top:225px"></div>
<svg class="abs" style="left:1125px;top:200px" width="239" height="40" viewBox="1125 200 239 40" fill="none" stroke="#c8c8c8" stroke-width="1.100">
<defs><linearGradient id="nw" x1="0" x2="1"><stop offset="0" stop-color="#484848"/><stop offset=".55" stop-color="#3a3a3a"/><stop offset="1" stop-color="#262626"/></linearGradient></defs><path d="M1126 216l88-10v10z" fill="url(#nw)" stroke="none"/>
<path d="M1126 226v10h44zM1214 226v10h-44z" fill="#2a2a2a" stroke="none"/>
<rect x="1178.500" y="201.500" width="3" height="18" fill="#6e6e6e" stroke="#8a8a8a" stroke-width=".8"/>
<rect x="1168.500" y="221.500" width="3" height="18" fill="#6e6e6e" stroke="#8a8a8a" stroke-width=".8"/>
<circle cx="1271.500" cy="211.500" r="6.500"/><path d="M1268 211.500h7"/>
<circle cx="1291" cy="211.500" r="6.500"/><path d="M1287.500 211.500h7M1291 208v7"/>
<circle cx="1311.500" cy="211.500" r="6.500"/><rect x="1308.500" y="208.500" width="6" height="6" rx="1" fill="#c8c8c8" stroke="none"/>
<path d="M1324.500 204v15M1324.500 224v15" stroke="#777"/>
<rect x="1329.500" y="205.500" width="7" height="7"/><rect x="1333.500" y="209.500" width="7" height="7" fill="#4f4f4f"/><path d="M1332 208l6 6M1338 211v3h-3"/>
<rect x="1349.500" y="205.500" width="11" height="11"/><path d="M1352 208l6 6M1352 211v-3h3M1358 211v3h-3"/>
<path d="M1268.500 228.500c3-3 8-1 8 3 0 3-2 5-5 5" /><path d="M1266 227l1 5 4-2.500z" fill="#c8c8c8" stroke="none"/>
<path d="M1294.500 228.500c-3-3-8-1-8 3 0 3 2 5 5 5" /><path d="M1297 227l-1 5-4-2.500z" fill="#c8c8c8" stroke="none"/>
<path d="M1308.500 226a6.300 6.300 0 1 0 5 0"/><path d="M1311 224v7"/><circle cx="1311" cy="232" r="1.600" fill="#c8c8c8" stroke="none"/>
<path d="M1329.500 226.500l5 4.500-5 4.500zM1341.500 226.500l-5 4.500 5 4.500z"/><path d="M1341.500 226.500l-5 4.500 5 4.500z" fill="#c8c8c8"/><path d="M1335.500 224.500v13"/>
<path d="M1350.500 224.500l4.500 5 4.500-5z" fill="#c8c8c8"/><path d="M1350.500 238.500l4.500-5 4.500 5z"/><path d="M1348.500 231.500h13"/>
</svg>
<div class="abs" style="left:1221px;top:204px;width:40px;text-align:right;font-size:11.5px;color:#e2e2e2;letter-spacing:-0.5px">126.0</div>
<div class="abs" style="left:1221px;top:224px;width:40px;text-align:right;font-size:11.5px;color:#e2e2e2;letter-spacing:-0.5px">0.0</div>
<!-- LAYER PROPERTY -->
<div class="abs" style="left:1120px;top:246px;width:244px;height:169px;background:#404040"></div>
<div class="abs" style="left:1352px;top:265px;width:12px;height:150px;background:#474747"></div>
<div class="abs" style="left:1120px;top:246px;width:19px;height:15px;background:#383838"></div>
<div class="abs" style="left:1232px;top:246px;width:132px;height:15px;background:#383838"></div>
<div class="abs" style="left:1139px;top:246px;width:93px;height:19px;background:#4f4f4f"></div>
<div class="abs" style="left:1120px;top:261px;width:244px;height:4px;background:#4f4f4f"></div>
<div class="abs tb3" style="left:1233px;top:246px"></div><div class="abs tb3" style="left:1263px;top:246px"></div><div class="abs tb3" style="left:1293px;top:246px"></div><div class="abs tb3" style="left:1323px;top:246px"></div>
<svg class="abs" style="left:1120px;top:246px" width="244" height="20" viewBox="1120 246 244 20" fill="none" stroke="#8a8a8a" stroke-width="1">
<path d="M1126 249.500h7.5M1126 252.500h7.5M1126 255.500h7.5"/>
<g stroke="#c8c8c8" stroke-width="1.100"><path d="M1146 253.500l7-3.500 7 3.500-7 3.500z"/><path d="M1146 257l7 3.500 3-1.500M1146 260.500l7 3.500 2-1"/><path d="M1155.500 259.500h2v2h-2zM1159 259.500h2v2h-2zM1155.500 263h2v2h-2zM1159 263h2v2h-2z" stroke-width=".7"/></g>
<g stroke="#747474"><path d="M1242 258l7-3.500 7 3.500-7 3.500zM1243 254c2-3 8-4 11-1l-2 1.500"/></g>
<g stroke="#747474"><circle cx="1279" cy="259" r="5"/><circle cx="1276" cy="262" r="4" fill="#666"/></g>
<g stroke="#747474"><rect x="1301.500" y="255.500" width="12" height="9"/><path d="M1304 259h4M1304 261.500h7"/></g>
<g stroke="#747474"><rect x="1331.500" y="255.500" width="12" height="9"/><circle cx="1336" cy="259" r="2" fill="#666"/><path d="M1334 264.500c1-3 5-4 8 0" fill="#666"/></g><rect x="1232" y="261" width="132" height="4" fill="#4f4f4f" stroke="none"/>
</svg>
<div class="abs" style="left:1167px;top:250px;font-size:10.5px;color:#d6d6d6;letter-spacing:-0.5px">Layer Property</div>
<div class="abs sec" style="top:268px">Effect</div><div class="abs secl" style="left:1159px;top:274px;width:189px"></div>
<div class="abs sec" style="top:305px">Expression color</div><div class="abs secl" style="left:1208px;top:311px;width:140px"></div>
<div class="abs sec" style="top:345px">Tool navigation</div><div class="abs secl" style="left:1204px;top:351px;width:144px"></div>
<div class="abs secl" style="left:1125px;top:274px;width:3px"></div><div class="abs secl" style="left:1125px;top:311px;width:3px"></div><div class="abs secl" style="left:1125px;top:351px;width:3px"></div>
<div class="abs btn" style="left:1247px;top:282px;width:102px;height:20px"></div>
<div class="abs btn" style="left:1137px;top:322px;width:160px;height:20px"></div>
<div class="abs btn" style="left:1139px;top:359px;width:51px;height:24px"></div><div class="abs btn" style="left:1192px;top:359px;width:51px;height:24px"></div><div class="abs btn" style="left:1245px;top:359px;width:51px;height:24px"></div><div class="abs btn" style="left:1298px;top:359px;width:51px;height:24px"></div>
<svg class="abs" style="left:1130px;top:280px" width="225" height="106" viewBox="1130 280 225 106" fill="none" stroke="#c8c8c8" stroke-width="1.100">
<circle cx="1258" cy="292" r="6.500"/>
<circle cx="1281.500" cy="290.500" r="5"/><circle cx="1278" cy="294" r="4.500" fill="#777" stroke="none"/><circle cx="1281.500" cy="290.500" r="5" />
<g fill="#c8c8c8" stroke="none"><path d="M1296 286h2v2h-2zM1300 286h2v2h-2zM1304 286h2v2h-2zM1298 288h2v2h-2zM1302 288h2v2h-2zM1306 288h2v2h-2zM1296 290h2v2h-2zM1300 290h2v2h-2zM1304 290h2v2h-2zM1298 292h2v2h-2zM1302 292h2v2h-2zM1306 292h2v2h-2zM1296 294h2v2h-2zM1300 294h2v2h-2zM1304 294h2v2h-2zM1298 296h2v2h-2zM1302 296h2v2h-2zM1306 296h2v2h-2z" opacity=".8"/></g>
<rect x="1320.500" y="289.500" width="9" height="9" rx="1.500" fill="#8a8a8a" stroke="#aaa"/><rect x="1317.500" y="286.500" width="9" height="9" rx="1.500" fill="#4f4f4f"/>
<path d="M1338 290.500l3.500 3.500 3.500-3.500" stroke-width="1.300"/>
<circle cx="1196.500" cy="329" r="3.800" fill="#e05050" stroke="none"/><circle cx="1193.500" cy="334.500" r="3.800" fill="#40c050" stroke="none"/><circle cx="1200" cy="334.500" r="3.800" fill="#4090e8" stroke="none"/><circle cx="1196.700" cy="332.700" r="1.600" fill="#f4f4f4" stroke="none"/>
<path d="M1285.500 330l3.500 3.500 3.500-3.500" stroke-width="1.300"/>
<!-- tool nav icons -->
<g stroke-width="1"><path d="M1155.500 366.500l6-3 6 2.500v7.500M1155.500 366.500v8.500l6 3.500M1155.500 366.500l6 3 6-3.500M1161.500 369.500v9"/><path d="M1164 371l8 4.500-3.500.5 2 4-1.500.8-2-4-2.500 2.500z" fill="#d0d0d0" stroke="none"/></g>
<g><path d="M1210.500 364v15.500M1210.500 365h14.500"/><rect x="1208" y="362.500" width="5" height="5" fill="#c8c8c8" stroke="none"/><path d="M1214 368.500l11.500 4.500-5 2-2.500 5.500z" fill="#c8c8c8" stroke="none"/></g>
<g><path d="M1263 378c2-5 4-8 7-9.500 3 1.500 4.500 4.500 6 9.500"/><rect x="1260.500" y="376" width="4.500" height="4.500" fill="#c8c8c8" stroke="none"/><rect x="1274" y="376" width="4.500" height="4.500" fill="#c8c8c8" stroke="none"/><path d="M1268 369l2-6c2-1.500 5-1 7 .5-.5 3-2.500 5.500-6 6z" fill="#c8c8c8" stroke="none"/></g>
<g><path d="M1314 373.500l6.500 3-6.500 3z" fill="#c8c8c8" stroke="none"/><path d="M1319 377.500h13"/><path d="M1321.500 375.500l7.500-12" stroke-width="2.600" stroke-linecap="round"/></g>
</svg>
<div class="abs" style="left:1208px;top:325px;font-size:11.5px;color:#e2e2e2;letter-spacing:-0.5px">Color</div>
<!--RIGHT2-->
<!-- LAYER panel -->
<div class="abs" style="left:1120px;top:419px;width:244px;height:348px;background:#4f4f4f"></div>
<div class="abs" style="left:1120px;top:419px;width:19px;height:15px;background:#383838"></div>
<div class="abs" style="left:1193px;top:419px;width:171px;height:15px;background:#383838"></div>
<div class="abs tb3" style="left:1194px;top:419px;width:62px"></div><div class="abs tb3" style="left:1257px;top:419px;width:83px"></div>
<svg class="abs" style="left:1120px;top:419px" width="244" height="20" viewBox="1120 419 244 20" fill="none" stroke="#8a8a8a" stroke-width="1">
<path d="M1126 422.500h7.5M1126 425.500h7.5M1126 428.500h7.5"/>
<g stroke="#c8c8c8" stroke-width="1.100"><path d="M1146 427.500l7-3.500 7 3.500-7 3.500z" fill="#4f4f4f"/><path d="M1146 431l7 3.500 7-3.500M1146 434.500l7 3.500 7-3.500"/></g>
<g stroke="#747474"><path d="M1203 426.500h9c4 0 4 6 0 6h-7M1206 423.500l-3 3 3 3"/></g>
<g stroke="#747474"><path d="M1265 426l13-3v3.500M1265 428.500h13v6h-13zM1267 428.500l1 2M1270 428.500l1 2M1273 428.500l1 2"/></g>
</svg>
<div class="abs" style="left:1167px;top:423px;font-size:10.5px;color:#d6d6d6;letter-spacing:-0.5px">Layer</div>
<div class="abs" style="left:1223px;top:423px;font-size:10.5px;color:#7c7c7c;letter-spacing:-0.45px;height:10.500px;overflow:hidden">History</div>
<div class="abs" style="left:1286px;top:423px;font-size:10.5px;color:#7c7c7c;letter-spacing:-0.45px;height:10.500px;overflow:hidden;white-space:nowrap">Auto Action</div>
<!-- row1 -->
<div class="abs btn" style="left:1121px;top:439px;width:39px;height:20px;background:#595959;border-color:#707070"></div>
<div class="abs btn" style="left:1163px;top:439px;width:79px;height:20px;background:#595959;border-color:#707070"></div>
<div class="abs" style="left:1180px;top:443px;font-size:11.5px;color:#e2e2e2;letter-spacing:-0.5px">Normal</div>
<svg class="abs" style="left:1120px;top:438px" width="244" height="70" viewBox="1120 438 244 70" fill="none" stroke="#c8c8c8" stroke-width="1.100">
<rect x="1126.500" y="443.500" width="13" height="11" rx="2.500" stroke="#8a8a8a" stroke-width="1.600"/>
<path d="M1148.500 447l3.500 3.500 3.500-3.500M1230.500 447l3.500 3.500 3.500-3.500" stroke-width="1.300"/>
<!-- opacity checker -->
<defs><linearGradient id="og" x1="0" x2="1"><stop offset="0" stop-color="#fff" stop-opacity="0"/><stop offset="1" stop-color="#cfcfcf"/></linearGradient>
<pattern id="ck" width="9" height="9" patternUnits="userSpaceOnUse" x="1248" y="444"><rect width="9" height="9" fill="#fff"/><rect width="4.500" height="4.500" fill="#c8c8c8"/><rect x="4.500" y="4.500" width="4.500" height="4.500" fill="#c8c8c8"/></pattern></defs>
<rect x="1248" y="444" width="78" height="9" fill="url(#ck)" stroke="none"/><rect x="1248" y="444" width="78" height="9" fill="url(#og)" stroke="none"/>
<rect x="1325.500" y="439.500" width="3" height="19" fill="#6e6e6e" stroke="#8a8a8a" stroke-width=".8"/>
<path d="M1353.500 446.500l3.500-3.500 3.500 3.500M1353.500 451.500l3.500 3.500 3.500-3.500" stroke-width="1.200"/>
<!-- row2 icons y~470 -->
<g stroke="#b4b4b4"><rect x="1160.500" y="464.500" width="9" height="9" rx="1.500" stroke-dasharray="2 1.500"/><rect x="1158.500" y="467.500" width="8" height="8" rx="1.500" fill="#8a8a8a" stroke="#8a8a8a"/></g>
<g stroke="#c8c8c8"><path d="M1185.500 464v3M1183 475.500l1.500-7h2l1.500 7zM1179 465.500l4 1.500M1192 465.500l-4 1.500M1179 471l4-1.500M1192 471l-4-1.500" /><path d="M1183.500 468h4l1.500 7.500h-7z" fill="#c8c8c8" stroke="none"/></g>
<g stroke="#c8c8c8"><rect x="1200.500" y="463.500" width="7" height="10" rx="1.500"/><path d="M1202.500 466.500l1.500 2 1.500-2"/><path d="M1205 476c1.500-2 4-3 6-1.500l-1-2.500M1211 474.500l-2.500.5"/></g>
<g><path d="M1222.500 468.500v-2.500c0-3.500 5-3.500 5 0v2.500" stroke-width="1.300"/><rect x="1220" y="468.500" width="10" height="7.500" rx="1" fill="#c8c8c8" stroke="none"/></g>
<g stroke="#707070"><path d="M1240.500 469.500v-2c0-3 4.500-3 4.500 0v2"/><rect x="1238.500" y="469.500" width="8" height="6" fill="#707070" stroke="none"/><g fill="#707070" stroke="none"><rect x="1247" y="463" width="3" height="3"/><rect x="1250" y="466" width="3" height="3"/><rect x="1247" y="469" width="3" height="3"/></g></g>
<rect x="1255.500" y="460.500" width="35" height="19" rx="2" fill="#484848" stroke="#5a5a5a"/><rect x="1293.500" y="460.500" width="35" height="19" rx="2" fill="#484848" stroke="#5a5a5a"/><rect x="1330.500" y="460.500" width="35" height="19" rx="2" fill="#4f4f4f" stroke="#6a6a6a"/>
<g stroke="#707070"><rect x="1261.500" y="464.500" width="10" height="10" rx="2" fill="#707070"/><circle cx="1266.500" cy="469.500" r="2.500" fill="#484848" stroke="none"/><path d="M1268 472l5 5M1273 472l-5 5" stroke-width="1.300"/><path d="M1279.500 467.500l3.500 3.500 3.500-3.500" stroke-width="1.300"/></g>
<g stroke="#707070"><path d="M1298.500 464.500h10l-10 10z" fill="#707070"/><path d="M1306 472l5 5M1311 472l-5 5" stroke-width="1.300"/><path d="M1316.500 467.500l3.500 3.500 3.500-3.500" stroke-width="1.300"/></g>
<rect x="1339.500" y="468.500" width="8" height="8" fill="#f4f4f4" stroke="none"/><rect x="1334" y="463" width="9" height="9" fill="#3c8cf0" stroke="#e8e8e8" stroke-width=".8"/>
<path d="M1353.500 467.500l3.500 3.500 3.500-3.500" stroke-width="1.300"/>
<!-- row3 y~493 -->
<rect x="1120.500" y="483.500" width="20" height="20" rx="2" fill="#65708c" stroke="none"/>
<g stroke="#dfe2ea" stroke-width="1"><rect x="1124.500" y="487.500" width="12" height="12" rx="1.500"/><path d="M1124.500 491.500h12M1124.500 495.500h12M1126.500 489.500h1.500M1126.500 493.500h1.500M1126.500 497.500h1.500"/></g>
<g><path d="M1208.500 486.500h11v8l-3 3h-8z" /><circle cx="1220.500" cy="498" r="3.200" fill="#4f4f4f"/><path d="M1218.500 498h4M1220.500 496v4" stroke-width=".9"/></g>
<g><rect x="1229.500" y="487.500" width="11" height="11" rx="1.500"/><circle cx="1235" cy="493" r="3"/><path d="M1235 490v3l2.500 1.500M1235 493l-2.500 1.500" stroke-width=".8"/><circle cx="1241" cy="498.500" r="3.200" fill="#4f4f4f"/><path d="M1239 498.500h4M1241 496.500v4" stroke-width=".9"/></g>
<g><path d="M1248.500 497v-10h5l1.500 2h6v8z" fill="#b4b4b4" stroke="none"/><circle cx="1260.500" cy="498.500" r="3.200" fill="#4f4f4f"/><path d="M1258.500 498.500h4M1260.500 496.500v4" stroke-width=".9"/></g>
<g><rect x="1274.500" y="485.500" width="8" height="8" rx="1" fill="#8a8a8a"/><rect x="1269.500" y="490.500" width="9" height="9" rx="1" fill="#4f4f4f"/><path d="M1272 496h4M1273.500 494.500l-1.500 1.500 1.500 1.500"/></g>
<g><rect x="1293.500" y="485.500" width="8" height="8" rx="1"/><rect x="1288.500" y="490.500" width="9" height="9" rx="1" fill="#4f4f4f"/><path d="M1291 496h4M1293.500 494.500l1.500 1.500-1.500 1.500"/></g>
<rect x="1308.500" y="486.500" width="13" height="13" rx="2" fill="#c8c8c8" stroke="none"/><circle cx="1315" cy="493" r="3.500" fill="#3c3c3c" stroke="none"/>
<g stroke="#707070"><rect x="1329.500" y="489.500" width="13" height="9" rx="1.500" fill="#707070"/><circle cx="1337" cy="494" r="2.500" fill="#4f4f4f" stroke="none"/><path d="M1328 492h4M1329.500 490.500l-1.500 1.500 1.500 1.500"/></g>
<path d="M1350.500 488.500h8l-.8 11h-6.400zM1349 488.500h11M1353 486.500h3M1353 490.500v7M1356 490.500v7"/>
</svg>
<div class="abs" style="left:1330px;top:443px;width:22px;text-align:right;font-size:11.5px;color:#e2e2e2;letter-spacing:-0.5px">100</div>
<!-- layer list -->
<div class="abs" style="left:1120px;top:506px;width:232px;height:231px;background:#2c2c2c;overflow:hidden">
 <div class="lr" style="top:0;height:31px"></div>
 <div class="lr" style="top:32px;height:30px"></div>
 <div class="lr" style="top:63px;height:40px"></div><div class="abs" style="left:39px;top:63px;width:193px;height:40px;background:#5f6b89"></div>
 <div class="lr" style="top:104px;height:40px"></div>
 <div class="lr" style="top:145px;height:30px"></div>
 <div class="lr" style="top:176px;height:40px"></div>
 <div class="lr" style="top:217px;height:30px"></div>
 <div class="abs" style="left:20px;top:0;width:1px;height:231px;background:#2c2c2c"></div>
 <div class="abs" style="left:38px;top:0;width:1px;height:231px;background:#2c2c2c"></div>
 <div class="abs" style="left:39px;top:62px;width:12px;height:1px;background:#3d3d3d"></div><div class="abs" style="left:39px;top:103px;width:12px;height:1px;background:#3d3d3d"></div><div class="abs" style="left:39px;top:175px;width:12px;height:1px;background:#3d3d3d"></div>
 <div class="lt" style="left:83px;top:4px">100 % Normal</div><div class="lt" style="left:83px;top:16px">Energy Blast</div>
 <div class="lt" style="left:83px;top:34px">100 % Normal</div><div class="lt" style="left:82px;top:47px">Outline</div>
 <div class="lt" style="left:120px;top:67px">100 % Normal</div><div class="lt" style="left:95px;top:87px">Outline</div>
 <div class="lt" style="left:120px;top:108px">100 % Normal</div><div class="lt" style="left:95px;top:128px">Hair Outline</div>
 <div class="lt" style="left:83px;top:147px">100 % Normal</div><div class="lt" style="left:83px;top:160px">Hatching</div>
 <div class="lt" style="left:95px;top:180px">100 % Normal</div><div class="lt" style="left:95px;top:200px">Hatching Cyberarm</div>
 <div class="lt" style="left:83px;top:219px">100 % Normal</div>
 <div class="th" style="top:64px;left:59px;width:31px;height:38px;border-color:#fff;box-shadow:inset 0 0 0 1px #444"></div><div class="th" style="top:107px"></div><div class="th" style="top:179px"></div>
 <svg class="abs" style="left:61px;top:66px" width="27" height="34" viewBox="0 0 27 34" fill="none" stroke="#9a9a9a" stroke-width="0.600"><path d="M9 8c1-1 2-1 3 0M10 9l-.5 4-1 4 .5 8-2 3M12 9l1 4 2 5 1 7 2 3M9 12l-4 2M12 11l6-2M7 28l-3 2h4M17 28l-3 3 5-.5"/></svg><div class="vi" style="top:66px"></div><div class="vi" style="top:107px"></div>
 <svg class="abs" style="left:0;top:0" width="232" height="231" viewBox="1120 506 232 231" fill="none" stroke="#c8c8c8" stroke-width="1.100">
 <g id="cb" stroke="#5a5a5a" stroke-width="1.300"><rect x="1125.500" y="516.500" width="9" height="10" rx="2"/></g>
 <g stroke="#5a5a5a" stroke-width="1.300" transform="translate(19.500 0)"><rect x="1125.500" y="516.500" width="9" height="10" rx="2"/></g><g stroke="#5a5a5a" stroke-width="1.300" transform="translate(19.500 30)"><rect x="1125.500" y="516.500" width="9" height="10" rx="2"/></g><g stroke="#5a5a5a" stroke-width="1.300" transform="translate(19.500 108)"><rect x="1125.500" y="516.500" width="9" height="10" rx="2"/></g><g stroke="#5a5a5a" stroke-width="1.300" transform="translate(19.500 143)"><rect x="1125.500" y="516.500" width="9" height="10" rx="2"/></g><g stroke="#5a5a5a" stroke-width="1.300" transform="translate(19.500 180)"><rect x="1125.500" y="516.500" width="9" height="10" rx="2"/></g><g stroke="#5a5a5a" stroke-width="1.300" transform="translate(0 218)"><rect x="1125.500" y="516.500" width="9" height="10" rx="2"/></g><g stroke="#5a5a5a" stroke-width="1.300" transform="translate(19.500 218)"><rect x="1125.500" y="516.500" width="9" height="10" rx="2"/></g>
 <g id="eye"><path d="M1123 552c3.500-5.500 10.500-5.500 14 0-3.500 4-10.500 4-14 0z" stroke-width="1.400"/><path d="M1123.500 551.500c3.500-4.500 9.500-4.500 13 0" stroke-width="1.900"/><circle cx="1130" cy="551.800" r="2.700" fill="#c8c8c8" stroke="none"/></g>
 <g transform="translate(0 36)"><path d="M1123 552c3.500-5.500 10.500-5.500 14 0-3.500 4-10.500 4-14 0z" stroke-width="1.400"/><path d="M1123.500 551.500c3.500-4.500 9.500-4.500 13 0" stroke-width="1.900"/><circle cx="1130" cy="551.800" r="2.700" fill="#c8c8c8" stroke="none"/></g><g transform="translate(0 77)"><path d="M1123 552c3.500-5.500 10.500-5.500 14 0-3.500 4-10.500 4-14 0z" stroke-width="1.400"/><path d="M1123.500 551.500c3.500-4.500 9.500-4.500 13 0" stroke-width="1.900"/><circle cx="1130" cy="551.800" r="2.700" fill="#c8c8c8" stroke="none"/></g><g transform="translate(0 113)"><path d="M1123 552c3.500-5.500 10.500-5.500 14 0-3.500 4-10.500 4-14 0z" stroke-width="1.400"/><path d="M1123.500 551.500c3.500-4.500 9.500-4.500 13 0" stroke-width="1.900"/><circle cx="1130" cy="551.800" r="2.700" fill="#c8c8c8" stroke="none"/></g><g transform="translate(0 148)"><path d="M1123 552c3.500-5.500 10.500-5.500 14 0-3.500 4-10.500 4-14 0z" stroke-width="1.400"/><path d="M1123.500 551.500c3.500-4.500 9.500-4.500 13 0" stroke-width="1.900"/><circle cx="1130" cy="551.800" r="2.700" fill="#c8c8c8" stroke="none"/></g>
 <path d="M1147.500 590l7.500-9.500" stroke-width="2.600"/><path d="M1144.500 595h12" /><path d="M1145 592.500l1.500-3 2 1.500z" fill="#c8c8c8" stroke="none"/>
 <path d="M1164.500 517.500l4 4-4 4M1162.500 553.500l4 4 4-4M1162.500 665.500l4 4 4-4M1164.500 733l3.500 3" stroke-width="1.300"/>
 <path d="M1177 528v-11.500h5l1.500 2h7.500v9.500z" fill="#c4c4c4" stroke="none"/>
 <g id="fo"><path d="M1177.500 559.500v-11h5l1.500 2h7.500v2" /><path d="M1177.500 559.500l3-7h13.500l-3 7z" fill="#c4c4c4" stroke="none"/></g><g transform="translate(0 112)"><path d="M1177.500 559.500v-11h5l1.500 2h7.500v2" /><path d="M1177.500 559.500l3-7h13.500l-3 7z" fill="#c4c4c4" stroke="none"/></g>
 <path d="M1177.500 737v-6h5l1.500 2h7.500v4" stroke="#c4c4c4"/>
 <g id="vic"><rect x="1224.500" y="575.500" width="9" height="10" rx="1.500" stroke="#333"/><path d="M1226.500 579l2.500-1.500 2.500 1.500v3l-2.500 1.500-2.500-1.500zM1226.500 579l2.500 1.500 2.500-1.500M1229 580.500v3" stroke="#333" stroke-width=".8"/></g><g transform="translate(0 41)"><rect x="1224.500" y="575.500" width="9" height="10" rx="1.500" stroke="#333"/><path d="M1226.500 579l2.500-1.500 2.500 1.500v3l-2.500 1.500-2.500-1.500zM1226.500 579l2.500 1.500 2.500-1.500M1229 580.500v3" stroke="#333" stroke-width=".8"/></g>
 </svg>
</div>
<!-- layer scrollbar -->
<div class="abs" style="left:1352px;top:506px;width:12px;height:231px;background:#404040"></div>
<div class="abs" style="left:1353px;top:507px;width:11px;height:12px;background:#4f4f4f;border-radius:2px"></div>
<div class="abs" style="left:1353px;top:724px;width:11px;height:12px;background:#4f4f4f;border-radius:2px"></div>
<div class="abs" style="left:1354px;top:520px;width:8px;height:127px;background:#5a5a5a;border-radius:4px"></div>
<svg class="abs" style="left:1353px;top:507px" width="11" height="260" viewBox="0 0 11 260" fill="none" stroke="#c8c8c8" stroke-width="1.200"><path d="M3 7.500l2.500-2.500 2.500 2.500M3 222l2.500 2.500 2.500-2.500M2.500 244l3-3 3 3M2.500 251l3 3 3-3"/></svg>
<!-- second list -->
<div class="abs" style="left:1120px;top:742px;width:232px;height:25px;background:#2c2c2c;overflow:hidden">
 <div class="lr" style="top:0;height:25px"></div>
 <div class="abs" style="left:20px;top:0;width:1px;height:25px;background:#2c2c2c"></div><div class="abs" style="left:38px;top:0;width:1px;height:25px;background:#2c2c2c"></div>
 <div class="lt" style="left:83px;top:4px">100 % Normal</div><div class="lt" style="left:83px;top:16px">Energy Blast</div>
 <svg class="abs" style="left:0;top:0" width="232" height="25" viewBox="1120 742 232 25" fill="none" stroke="#c8c8c8" stroke-width="1.100">
 <rect x="1125.500" y="753.500" width="9" height="10" rx="2" stroke="#5a5a5a" stroke-width="1.300"/><rect x="1145" y="753.500" width="9" height="10" rx="2" stroke="#5a5a5a" stroke-width="1.300"/>
 <path d="M1164.500 754.500l4 4-4 4" stroke-width="1.300"/><path d="M1177 765v-11.500h5l1.500 2h7.500v9.500z" fill="#c4c4c4" stroke="none"/></svg>
</div>
<div class="abs" style="left:1352px;top:742px;width:12px;height:25px;background:#404040"></div>
<!--/RIGHT2-->
<!--MID-->
<!-- command bar icons -->
<svg class="abs" style="left:213px;top:48px" width="894" height="26" viewBox="213 48 894 26" fill="none" stroke="#c8c8c8" stroke-width="1.200" stroke-linejoin="round">
<rect x="217.500" y="52.500" width="17" height="17" rx="1.500" stroke="#bdbdbd" stroke-width="1"/>
<path d="M229.500 60.500c-1-2-4.500-2-5.500 0-1 2 1 4 3 3.500 3-.5 5-3 4.500-5.500-1-3.500-6.500-4.500-9.500-2-3 2.500-2.500 7 .5 9 3.500 2 8 .5 9.500-2" stroke="#c4c4c4" stroke-width="1.300"/>
<path d="M242.500 50v22M336.500 50v22M392.500 50v22M496.500 50v22M576.500 50v22M656.500 50v22M688.500 50v22" stroke="#6e6e6e" stroke-width="1"/>
<!-- new -->
<path d="M252.500 53.500h12v9M252.500 53.500v11l3.500 3.500h3.500" stroke-width="1.300"/><path d="M252.500 64.500h3.500v3.500" stroke-width="1"/><circle cx="264.500" cy="67.500" r="4.300" fill="#525252"/><path d="M262 67.500h5M264.500 65v5" stroke-width="1"/>
<!-- open -->
<path d="M274.500 68.500v-13h5.500l1.500 2h5v3" stroke-width="1.200"/><path d="M274.500 68.500l3.500-8h14.500l-3.500 8z" fill="#bdbdbd" stroke="#bdbdbd" stroke-width="1"/><path d="M285 55h6M289 53l2.500 2-2.500 2" stroke-width="1.100"/>
<!-- save -->
<path d="M297.500 66.500l4-9h10l4 9z" stroke-width="1.200"/><rect x="297.500" y="66.500" width="18" height="3" fill="#bdbdbd" stroke="#bdbdbd" stroke-width=".8"/><path d="M306.500 52v8M303.500 57.500l3 3 3-3" stroke-width="1.200"/>
<path d="M321.500 59.500l3.500 3.500 3.500-3.500" stroke-width="1.300"/>
<!-- undo -->
<path d="M346 68.500h8c7 0 7-10.500 0-10.500h-7.500" stroke-width="1.300"/><path d="M350 53.500l-5 4.500 5 4.500z" fill="#c8c8c8" stroke="none"/>
<g stroke="#787878"><path d="M382 68.500h-8c-7 0-7-10.500 0-10.500h7.500" stroke-width="1.300"/><path d="M378 53.500l5 4.500-5 4.500z" fill="#787878" stroke="none"/></g>
<!-- spinner -->
<g stroke-width="1.600" stroke-linecap="round" transform="translate(408 61)"><path d="M4.8 0.0L8.2 0.0M4.2 2.4L7.1 4.1M2.4 4.2L4.1 7.1M0.0 4.8L0.0 8.2M-2.4 4.2L-4.1 7.1M-4.2 2.4L-7.1 4.1M-4.8 0.0L-8.2 0.0M-4.2 -2.4L-7.1 -4.1M-2.4 -4.2L-4.1 -7.1M-0.0 -4.8L-0.0 -8.2M2.4 -4.2L4.1 -7.1M4.2 -2.4L7.1 -4.1"/></g>
<g stroke="#787878"><rect x="425.500" y="53.500" width="11" height="11" stroke-dasharray="2 1.500"/><path d="M438 62h3M437 66l2.500 2M434 67.500v3M430 67l-1.500 2.500M441 58.500h-2" stroke-width="1"/></g>
<g stroke="none" fill="#787878"><path d="M456.500 52l9.500 9-9.500 9-9.500-9z"/><path d="M447 61c-1.500 2-1.500 4 0 5.500 1-1.500 1.500-3.500 0-5.500z"/><path d="M450.500 58.500l6-5 6 5z" fill="#525252"/></g>
<g><rect x="474.500" y="54.500" width="13" height="13"/><g fill="#c8c8c8" stroke="none"><rect x="473" y="53" width="3" height="3"/><rect x="486" y="53" width="3" height="3"/><rect x="473" y="66" width="3" height="3"/><rect x="486" y="66" width="3" height="3"/><rect x="479.500" y="66" width="3" height="3"/><rect x="486" y="59.500" width="3" height="3"/></g><path d="M481 54.500v-4" /><circle cx="481" cy="50" r="1" fill="#c8c8c8" stroke="none"/></g>
<g stroke="#787878" stroke-width="1"><rect x="503.500" y="53.500" width="15" height="15" stroke-dasharray="2.500 1.500"/><path d="M503 53l17 17"/>
<rect x="528.500" y="53.500" width="15" height="15" stroke-dasharray="2.500 1.500"/><path d="M544 54v15h-15z" fill="#787878" stroke="none"/>
<rect x="552.500" y="53.500" width="15" height="15" rx="2"/><rect x="554.500" y="55.500" width="11" height="11" stroke-dasharray="2 1.500"/></g>
<rect x="580" y="49" width="23.500" height="24" rx="2" fill="#65708c" stroke="none"/><rect x="604.500" y="49" width="23.500" height="24" rx="2" fill="#65708c" stroke="none"/>
<g stroke="#d6d9e2"><path d="M585.500 55v13.500h13.500zM588 65.500l5.500-5.500" stroke-width="1.100"/><path d="M593 61l7-7.500" stroke-width="2.300" stroke-linecap="round"/></g>
<g stroke="#d6d9e2"><path d="M608.500 61.500h17c0 11-17 11-17 0z" stroke-width="1.100"/><path d="M617 61l7-7.500" stroke-width="2.300" stroke-linecap="round"/></g>
<g><path d="M634.500 68v-7h14M631 66.500h19M638 57v13" stroke-width="1" stroke="#8a8a8a"/><path d="M634.500 67.500v-6.500h7" stroke-width="1.400"/><path d="M642 60l7-7" stroke-width="2.300" stroke-linecap="round"/><path d="M634.500 67h14" stroke-width="1.400"/></g>
<g><rect x="666.500" y="51.500" width="12" height="19" rx="1.500"/><path d="M666.500 68h12v2.500h-12z" fill="#c8c8c8"/><g fill="#c8c8c8" stroke="none"><rect x="669" y="54" width="2" height="2"/><rect x="672" y="54" width="2" height="2"/><rect x="675" y="54" width="2" height="2"/><rect x="669" y="57" width="2" height="2"/><rect x="672" y="57" width="2" height="2"/><rect x="669" y="60" width="2" height="2"/><rect x="672" y="60" width="2" height="2"/><rect x="669" y="63" width="2" height="2"/></g></g>
<g><path d="M699.500 69.500l2-3.500c-3.500-1.500-5-5-3.500-8.500 2-4 8-5 11.500-2 3.500 3 2.500 8.500-1.500 10.500-2 1-4 1-6 .5z"/><path d="M707.500 53.500l4-3.500M708.500 50h3v3" stroke-width="1"/></g>
</svg>
<div class="abs" style="left:698px;top:54px;width:12px;text-align:center;font-size:12px;font-weight:bold;color:#c8c8c8">?</div>
<svg class="abs" style="left:1090px;top:76px" width="16" height="14" viewBox="0 0 16 14" fill="none" stroke="#c8c8c8" stroke-width="1.300"><path d="M4 5.500l3.500 3.500 3.500-3.500"/></svg>
<div class="abs" style="left:299px;top:82px;width:6px;height:6px;border-radius:50%;background:#c9cbd2"></div>
<!--/MID-->
<!--BOTTOM-->
<!-- v scrollbar -->
<div class="abs" style="left:1092px;top:96px;width:12px;height:617px;background:#454545"></div>
<div class="abs" style="left:1092.500px;top:97px;width:11px;height:12px;background:#545454;border-radius:2px"></div>
<div class="abs" style="left:1092.500px;top:701px;width:11px;height:12px;background:#545454;border-radius:2px"></div>
<div class="abs" style="left:1094px;top:248px;width:8.500px;height:90px;background:#5c5c5c;border-radius:4px"></div>
<svg class="abs" style="left:1092.500px;top:97px" width="11" height="616" viewBox="0 0 11 616" fill="none" stroke="#c8c8c8" stroke-width="1.200"><path d="M3 7.500l2.500-2.500 2.500 2.500M3 609l2.500 2.500 2.500-2.500"/></svg>
<!-- status bar -->
<div class="abs" style="left:213px;top:713px;width:891px;height:12px;background:#454545"></div><div class="abs" style="left:1092px;top:713px;width:12px;height:12px;background:#505050"></div>
<div class="abs" style="left:214px;top:713px;width:59px;height:12px;background:#333"></div>
<div class="abs" style="left:278px;top:713px;width:34px;height:12px;background:#333"></div>
<div class="abs" style="left:376px;top:713px;width:46px;height:12px;background:#333"></div>
<div class="abs" style="left:426px;top:713px;width:46px;height:12px;background:#333"></div>
<div class="abs" style="left:535px;top:714px;width:10px;height:11px;background:#5a5a5a;border-radius:2px"></div>
<div class="abs" style="left:1080px;top:714px;width:11px;height:11px;background:#565656;border-radius:2px"></div>
<div class="abs" style="left:768px;top:716px;width:128px;height:8px;background:#5e5e5e;border-radius:4px"></div>
<svg class="abs" style="left:213px;top:713px" width="891" height="12" viewBox="213 713 891 12" fill="none" stroke="#b4b4b4" stroke-width="1.100">
<path d="M215 724l57-7v7zM279 724l32-7v7z" fill="#484848" stroke="none"/>
<path d="M377 724l44-4v4z" fill="#484848" stroke="none"/><path d="M427 724l22-9 22 9z" fill="#484848" stroke="none"/>
<rect x="274" y="713" width="3" height="12" fill="#6e6e6e" stroke="none"/><rect x="422" y="713" width="3" height="12" fill="#6e6e6e" stroke="none"/>
<path d="M320.500 719.500h8M340.500 719.500h8M344.500 715.500v8" stroke-width="1.300"/><rect x="361" y="716" width="6" height="6" fill="#c8c8c8" stroke="none"/>
<path d="M482 717c3-2.500 7 0 6 4" /><path d="M480 715.500l.5 4 3.500-2z" fill="#b4b4b4" stroke="none"/>
<path d="M506 717c-3-2.500-7 0-6 4" /><path d="M508 715.500l-.5 4-3.500-2z" fill="#b4b4b4" stroke="none"/>
<path d="M521.500 715.500a4.500 4.500 0 1 0 4 0"/><path d="M523.500 714v5"/><circle cx="523.500" cy="720" r="1.200" fill="#b4b4b4" stroke="none"/>
<path d="M541.500 716.500l-3 3 3 3M1084 716.500l3 3-3 3" stroke="#d0d0d0" stroke-width="1.300"/>
</svg>
<div class="abs" style="left:216px;top:713px;font-size:12px;line-height:16px;height:12px;overflow:hidden;color:#e0e0e0;letter-spacing:-0.3px">126.0</div>
<div class="abs" style="left:379px;top:713px;font-size:12px;line-height:16px;height:12px;overflow:hidden;color:#e0e0e0;letter-spacing:-0.3px">0.0</div>
<!-- bottom buttons -->
<div class="abs" style="left:237px;top:730px;width:38px;height:33px;background:#4a4a4a"></div>
<div class="abs" style="left:281px;top:730px;width:38px;height:33px;background:#4a4a4a"></div>
<svg class="abs" style="left:213px;top:727px" width="110" height="40" viewBox="213 727 110 40" fill="none" stroke="#8c8c8c" stroke-width="1.100">
<path d="M219.500 736.500l4-4 4 4M219.500 753l4 4 4-4M219.500 757l4 4 4-4"/>
<g stroke="#c8c8c8"><rect x="248.500" y="738.500" width="15" height="15" rx="1"/><path d="M252.500 738.500v15M259.500 738.500v15"/><path d="M254.500 742l1.500-1.500 1.500 1.500M254.500 745.500l1.500 1.500 1.500-1.500M254.500 750l1.500 1.500 1.500-1.500" stroke-width=".9"/></g>
<g stroke="#c8c8c8"><rect x="292.500" y="738.500" width="15" height="15" rx="1"/><path d="M300 738.500v3.500M300 750v3.500M292.500 746h3M304.500 746h3"/><rect x="295.500" y="742.500" width="9" height="7" rx="1"/><circle cx="300" cy="746" r="1.600" fill="#c8c8c8" stroke="none"/></g>
</svg>
<!--/BOTTOM-->
</div></body></html>
